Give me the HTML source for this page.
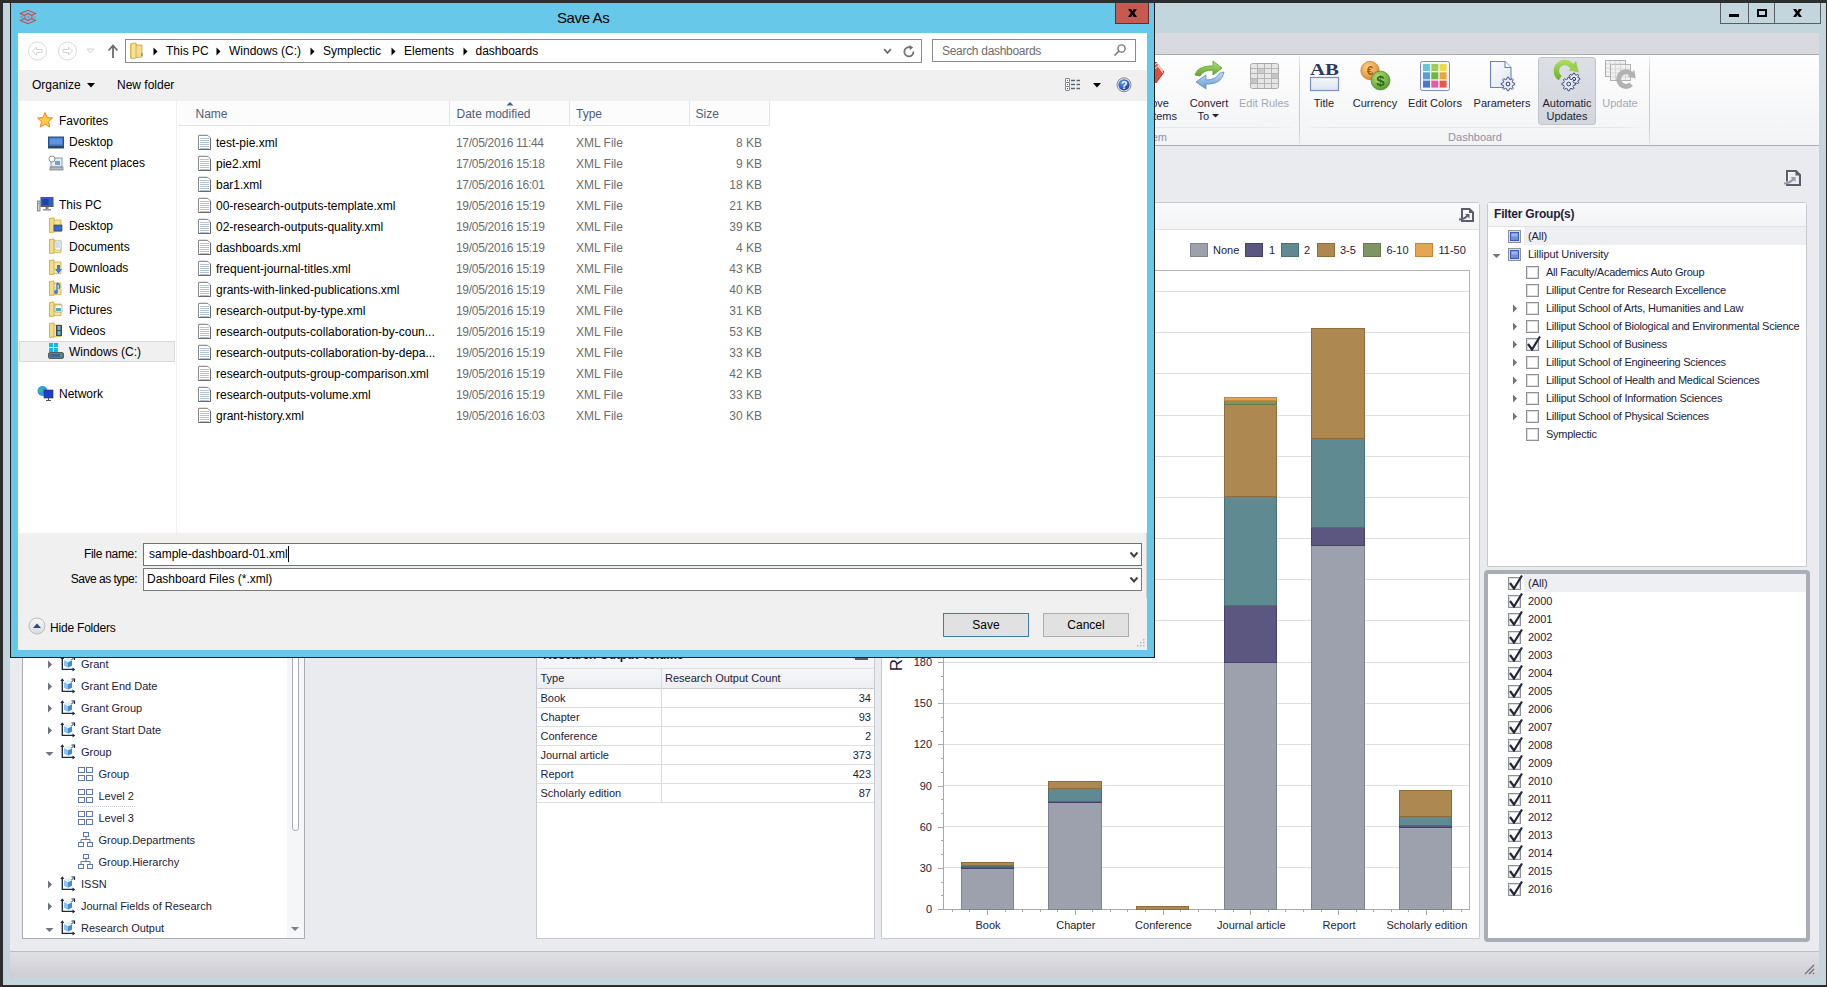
<!DOCTYPE html><html><head><meta charset="utf-8"><style>html,body{margin:0;padding:0}body{width:1827px;height:987px;overflow:hidden;position:relative;background:#2d2d2d;font-family:"Liberation Sans",sans-serif}</style></head><body>
<div style="position:absolute;left:3px;top:3px;width:1823px;height:982px;background:#c4d6dd"></div>
<div style="position:absolute;left:1720px;top:3px;width:101px;height:21px;background:#c4d6dd;border:1px solid #5a5d62;border-top:none;box-sizing:border-box"></div>
<div style="position:absolute;left:1748px;top:3px;width:1px;height:21px;background:#5a5d62"></div>
<div style="position:absolute;left:1774px;top:3px;width:1px;height:21px;background:#5a5d62"></div>
<div style="position:absolute;left:1729px;top:14px;width:10px;height:3px;background:#000"></div>
<div style="position:absolute;left:1757px;top:9px;width:10px;height:8px;border:2px solid #000;box-sizing:border-box"></div>
<svg style="position:absolute;left:1793px;top:9px" width="9" height="9" viewBox="0 0 9 9"><path d="M0 0 H3.2 L4.5 2.3 L5.8 0 H9 L6.2 4 L9 8 H5.8 L4.5 5.7 L3.2 8 H0 L2.8 4 Z" fill="#000"/></svg>
<div style="position:absolute;left:10px;top:33px;width:1809px;height:945px;background:#e9ebef"></div>
<div style="position:absolute;left:10px;top:33px;width:1809px;height:22px;background:#d9dadf;border-bottom:1px solid #a8abb6;box-sizing:border-box"></div>
<div style="position:absolute;left:10px;top:55px;width:1809px;height:91px;background:linear-gradient(#fefefe,#f2f3f5);border-bottom:1px solid #a9adb6;box-sizing:border-box"></div>
<div style="position:absolute;left:1299px;top:56px;width:1px;height:89px;background:linear-gradient(#f0f0f3,#c9ccd3 20%,#c9ccd3 80%,#e6e7ea)"></div>
<div style="position:absolute;left:1649px;top:56px;width:1px;height:89px;background:linear-gradient(#f0f0f3,#c9ccd3 20%,#c9ccd3 80%,#e6e7ea)"></div>
<div style="position:absolute;left:1155px;top:127px;width:140px;height:1px;background:linear-gradient(90deg,#e3e5ea,#e3e5ea 70%,rgba(227,229,234,0))"></div>
<div style="position:absolute;left:1302px;top:127px;width:343px;height:1px;background:linear-gradient(90deg,rgba(227,229,234,0),#e3e5ea 10%,#e3e5ea 90%,rgba(227,229,234,0))"></div>
<div style="position:absolute;left:10px;top:951px;width:1809px;height:27px;background:linear-gradient(#dfe0e4,#cdcdd3);border-top:1px solid #bcbec5;box-sizing:border-box"></div>
<svg style="position:absolute;left:1803px;top:963px" width="12" height="12" viewBox="0 0 12 12"><path d="M11 2 L2 11 M11 6 L6 11 M11 10 L10 11" stroke="#6b6e76" stroke-width="1.2"/></svg>
<div style="position:absolute;left:22px;top:640px;width:283px;height:299px;background:#fff;border:1px solid #a9acb4;box-sizing:border-box"></div>
<div style="position:absolute;left:287px;top:641px;width:17px;height:297px;background:#f5f6f8"></div>
<div style="position:absolute;left:292px;top:641px;width:7px;height:190px;background:#fff;border:1px solid #a9acb4;border-radius:3px;box-sizing:border-box"></div>
<svg style="position:absolute;left:290px;top:926px" width="11" height="6" viewBox="0 0 11 6"><path d="M1 1 L9 1 L5 5 Z" fill="#7b7e86"/></svg>
<div style="position:absolute;left:536px;top:640px;width:339px;height:299px;background:#fff;border:1px solid #c7cad1;box-sizing:border-box"></div>
<div style="position:absolute;left:537px;top:641px;width:337px;height:28px;background:linear-gradient(#f9f9fa,#f3f4f6);border-bottom:1px solid #dfe1e5;box-sizing:border-box"></div>
<div style="position:absolute;left:881px;top:202px;width:599px;height:737px;background:#fff;border:1px solid #c7cad1;border-radius:3px 3px 0 0;box-sizing:border-box"></div>
<div style="position:absolute;left:882px;top:203px;width:597px;height:27px;background:linear-gradient(#fafafb,#f3f4f6);border-bottom:1px solid #dfe1e5;box-sizing:border-box"></div>
<div style="position:absolute;left:1487px;top:202px;width:320px;height:365px;background:#fff;border:1px solid #c7cad1;border-radius:3px 3px 0 0;box-sizing:border-box"></div>
<div style="position:absolute;left:1488px;top:203px;width:318px;height:24px;background:linear-gradient(#fafafb,#f3f4f6);border-bottom:1px solid #dfe1e5;box-sizing:border-box"></div>
<div style="position:absolute;left:1484px;top:570px;width:326px;height:372px;background:#fff;border:4px solid #a9adb5;border-radius:4px;box-sizing:border-box"></div>
<svg style="position:absolute;left:1148px;top:60px" width="18" height="26" viewBox="0 0 18 26"><path d="M0 10 L8 2 L16 12 L8 23 Z" fill="#d9503e" stroke="#b83c2c" stroke-width="1"/><path d="M3 8 L9 3 L15 11 M4 11 L10 6 L15 13" fill="none" stroke="#f6cfc6" stroke-width="1.2"/></svg>
<div style="position:absolute;right:658px;top:97.69px;font:normal 11px/11px 'Liberation Sans', sans-serif;color:#1e2238;white-space:nowrap;text-align:right;">ove</div>
<div style="position:absolute;right:650px;top:110.69px;font:normal 11px/11px 'Liberation Sans', sans-serif;color:#1e2238;white-space:nowrap;text-align:right;">tems</div>
<div style="position:absolute;right:660px;top:131.69px;font:normal 11px/11px 'Liberation Sans', sans-serif;color:#8d93a8;white-space:nowrap;text-align:right;">em</div>
<svg style="position:absolute;left:1193px;top:59px" width="33" height="33" viewBox="0 0 33 33"><defs><linearGradient id="cg1" x1="0" y1="0" x2="0" y2="1"><stop offset="0" stop-color="#b6e27a"/><stop offset="1" stop-color="#5ea52a"/></linearGradient><linearGradient id="cg2" x1="0" y1="0" x2="0" y2="1"><stop offset="0" stop-color="#c9e0f6"/><stop offset="1" stop-color="#5f97d3"/></linearGradient></defs><path d="M2 16 Q4 8 16 7 L20 7 L20 2 L29 9 L20 16 L20 11 Q10 11 7 17 Z" fill="url(#cg1)" stroke="#5d9a2e" stroke-width="0.8"/><path d="M31 13 Q29 24 17 25 L13 25 L13 30 L3 23 L13 16 L13 21 Q23 21 27 14 Z" fill="url(#cg2)" stroke="#5b8cc4" stroke-width="0.8"/></svg>
<div style="position:absolute;left:1009px;width:400px;text-align:center;top:97.69px;font:normal 11px/11px 'Liberation Sans', sans-serif;color:#1e2238;white-space:nowrap;">Convert</div>
<div style="position:absolute;left:1197.5px;top:110.69px;font:normal 11px/11px 'Liberation Sans', sans-serif;color:#1e2238;white-space:nowrap;">To</div>
<svg style="position:absolute;left:1212px;top:114px" width="7" height="4" viewBox="0 0 7 4"><path d="M0 0 L7 0 L3.5 3.5 Z" fill="#1e2238"/></svg>
<svg style="position:absolute;left:1250px;top:63px" width="30" height="27" viewBox="0 0 30 27"><rect x="0.5" y="0.5" width="28" height="25" rx="2" fill="#e6e6e6" stroke="#a8a8a8"/><rect x="7.5" y="5.5" width="7" height="5" fill="#cdcdcd"/><rect x="21.5" y="10.5" width="7" height="5" fill="#c4c4c4"/><rect x="0.5" y="15.5" width="7" height="5" fill="#c4c4c4"/><g stroke="#b4b4b4" stroke-width="1"><path d="M7.5 1V25M14.5 1V25M21.5 1V25M1 5.5H28M1 10.5H28M1 15.5H28M1 20.5H28"/></g></svg>
<div style="position:absolute;left:1064px;width:400px;text-align:center;top:97.69px;font:normal 11px/11px 'Liberation Sans', sans-serif;color:#a4a8b9;white-space:nowrap;">Edit Rules</div>
<svg style="position:absolute;left:1308px;top:60px" width="33" height="32" viewBox="0 0 33 32"><defs><linearGradient id="tg" x1="0" y1="0" x2="0" y2="1"><stop offset="0" stop-color="#f4f6fb"/><stop offset="1" stop-color="#dde4f2"/></linearGradient></defs><text x="2" y="14.5" font-family="Liberation Serif" font-weight="bold" font-size="17" fill="#2c3b5c" textLength="29" lengthAdjust="spacingAndGlyphs">AB</text><rect x="2.5" y="17.5" width="28" height="13" fill="url(#tg)" stroke="#7d8fc2" stroke-width="1.2"/></svg>
<div style="position:absolute;left:1124px;width:400px;text-align:center;top:97.69px;font:normal 11px/11px 'Liberation Sans', sans-serif;color:#1e2238;white-space:nowrap;">Title</div>
<svg style="position:absolute;left:1355px;top:60px" width="36" height="32" viewBox="0 0 36 32"><defs><radialGradient id="eg" cx="0.4" cy="0.35" r="0.7"><stop offset="0" stop-color="#ffd98a"/><stop offset="1" stop-color="#d9822b"/></radialGradient><radialGradient id="dg" cx="0.4" cy="0.35" r="0.7"><stop offset="0" stop-color="#b9e27e"/><stop offset="1" stop-color="#4f9a28"/></radialGradient></defs><circle cx="15" cy="10.5" r="9.2" fill="url(#eg)" stroke="#c07020" stroke-width="0.6"/><text x="15" y="15" font-family="Liberation Sans" font-weight="bold" font-size="12" fill="#a85a14" text-anchor="middle">€</text><circle cx="25.5" cy="20.5" r="9.5" fill="url(#dg)" stroke="#3f7f20" stroke-width="0.6"/><text x="25.5" y="26" font-family="Liberation Sans" font-weight="bold" font-size="15" fill="#2f6a18" text-anchor="middle">$</text></svg>
<div style="position:absolute;left:1175px;width:400px;text-align:center;top:97.69px;font:normal 11px/11px 'Liberation Sans', sans-serif;color:#1e2238;white-space:nowrap;">Currency</div>
<svg style="position:absolute;left:1420px;top:61px" width="31" height="31" viewBox="0 0 31 31"><rect x="0.5" y="0.5" width="29" height="29" rx="2" fill="#f4f6fa" stroke="#7d8fb8" stroke-width="1"/><rect x="3.0" y="3.0" width="7" height="7" fill="#63c7d5"/><rect x="11.3" y="3.0" width="7" height="7" fill="#9fcf4f"/><rect x="19.6" y="3.0" width="7" height="7" fill="#f0d94f"/><rect x="3.0" y="11.3" width="7" height="7" fill="#5b9bd8"/><rect x="11.3" y="11.3" width="7" height="7" fill="#6cb83a"/><rect x="19.6" y="11.3" width="7" height="7" fill="#f2a140"/><rect x="3.0" y="19.6" width="7" height="7" fill="#4a78c8"/><rect x="11.3" y="19.6" width="7" height="7" fill="#e85aa8"/><rect x="19.6" y="19.6" width="7" height="7" fill="#e8584a"/></svg>
<div style="position:absolute;left:1235px;width:400px;text-align:center;top:97.69px;font:normal 11px/11px 'Liberation Sans', sans-serif;color:#1e2238;white-space:nowrap;">Edit Colors</div>
<svg style="position:absolute;left:1489px;top:60px" width="30" height="32" viewBox="0 0 30 32"><defs><linearGradient id="pg" x1="0" y1="0" x2="1" y2="1"><stop offset="0" stop-color="#fbfcfe"/><stop offset="1" stop-color="#dfe5f1"/></linearGradient></defs><path d="M1.5 1.5 L16 1.5 L22 7.5 L22 27.5 L1.5 27.5 Z" fill="url(#pg)" stroke="#6f82bd" stroke-width="1.1"/><path d="M16 1.5 L16 7.5 L22 7.5" fill="#fff" stroke="#6f82bd" stroke-width="1.1"/><polygon points="25.77,23.33 25.77,24.67 23.69,25.42 23.32,26.31 24.26,28.31 23.31,29.26 21.31,28.32 20.42,28.69 19.67,30.77 18.33,30.77 17.58,28.69 16.69,28.32 14.69,29.26 13.74,28.31 14.68,26.31 14.31,25.42 12.23,24.67 12.23,23.33 14.31,22.58 14.68,21.69 13.74,19.69 14.69,18.74 16.69,19.68 17.58,19.31 18.33,17.23 19.67,17.23 20.42,19.31 21.31,19.68 23.31,18.74 24.26,19.69 23.32,21.69 23.69,22.58" fill="#e9ecf3" stroke="#2f3d6e" stroke-width="0.9" stroke-linejoin="round"/><circle cx="19" cy="24" r="1.90" fill="none" stroke="#2f3d6e" stroke-width="1"/></svg>
<div style="position:absolute;left:1302px;width:400px;text-align:center;top:97.69px;font:normal 11px/11px 'Liberation Sans', sans-serif;color:#1e2238;white-space:nowrap;">Parameters</div>
<div style="position:absolute;left:1538px;top:57px;width:58px;height:68px;background:linear-gradient(#dcdfe5,#d3d6dd);border:1px solid #c2c5cc;border-radius:3px;box-sizing:border-box"></div>
<svg style="position:absolute;left:1552px;top:58px" width="32" height="34" viewBox="0 0 32 34"><defs><linearGradient id="ag" x1="0" y1="0" x2="0" y2="1"><stop offset="0" stop-color="#a6da5c"/><stop offset="1" stop-color="#6db42c"/></linearGradient></defs><path d="M8.25 20.05 A8.5 8.5 0 1 1 20.2 8.6" fill="none" stroke="url(#ag)" stroke-width="5.3"/><path d="M23.9 3 L27 14.5 L16.7 12.2 Z" fill="#96d04e"/><polygon points="27.97,20.41 27.97,21.59 26.13,22.25 25.81,23.04 26.64,24.81 25.81,25.64 24.04,24.81 23.25,25.13 22.59,26.97 21.41,26.97 20.75,25.13 19.96,24.81 18.19,25.64 17.36,24.81 18.19,23.04 17.87,22.25 16.03,21.59 16.03,20.41 17.87,19.75 18.19,18.96 17.36,17.19 18.19,16.36 19.96,17.19 20.75,16.87 21.41,15.03 22.59,15.03 23.25,16.87 24.04,17.19 25.81,16.36 26.64,17.19 25.81,18.96 26.13,19.75" fill="#e9ecf3" stroke="#2f3d6e" stroke-width="0.9" stroke-linejoin="round"/><circle cx="22" cy="21" r="1.68" fill="none" stroke="#2f3d6e" stroke-width="1"/><polygon points="23.47,25.33 23.47,26.67 21.39,27.42 21.02,28.31 21.96,30.31 21.01,31.26 19.01,30.32 18.12,30.69 17.37,32.77 16.03,32.77 15.28,30.69 14.39,30.32 12.39,31.26 11.44,30.31 12.38,28.31 12.01,27.42 9.93,26.67 9.93,25.33 12.01,24.58 12.38,23.69 11.44,21.69 12.39,20.74 14.39,21.68 15.28,21.31 16.03,19.23 17.37,19.23 18.12,21.31 19.01,21.68 21.01,20.74 21.96,21.69 21.02,23.69 21.39,24.58" fill="#e9ecf3" stroke="#2f3d6e" stroke-width="0.9" stroke-linejoin="round"/><circle cx="16.7" cy="26" r="1.90" fill="none" stroke="#2f3d6e" stroke-width="1"/></svg>
<div style="position:absolute;left:1367px;width:400px;text-align:center;top:97.69px;font:normal 11px/11px 'Liberation Sans', sans-serif;color:#1e2238;white-space:nowrap;">Automatic</div>
<div style="position:absolute;left:1367px;width:400px;text-align:center;top:110.69px;font:normal 11px/11px 'Liberation Sans', sans-serif;color:#1e2238;white-space:nowrap;">Updates</div>
<svg style="position:absolute;left:1603px;top:59px" width="36" height="32" viewBox="0 0 36 32"><g fill="#f2f2f2" stroke="#b0b0b0" stroke-width="1"><rect x="2.5" y="1.5" width="20" height="16"/><rect x="7.5" y="5.5" width="20" height="16"/></g><g stroke="#d2d2d2" stroke-width="0.8"><path d="M8 10H27M8 14H27M8 18H27M12.5 6V21M17.5 6V21M22.5 6V21M3 5H22M3 9H7M3 13H7M7 2V5M12 2V5M17 2V5"/></g><path d="M28.2 25.2 A7.3 7.3 0 1 1 28 14.8" fill="none" stroke="#b2b2b2" stroke-width="5"/><path d="M31.3 11 L32.7 19.6 L24.4 17.6 Z" fill="#b2b2b2"/></svg>
<div style="position:absolute;left:1420px;width:400px;text-align:center;top:97.69px;font:normal 11px/11px 'Liberation Sans', sans-serif;color:#a4a8b9;white-space:nowrap;">Update</div>
<div style="position:absolute;left:1275px;width:400px;text-align:center;top:131.69px;font:normal 11px/11px 'Liberation Sans', sans-serif;color:#8d93a8;white-space:nowrap;">Dashboard</div>
<svg style="position:absolute;left:1783px;top:169px" width="19" height="19" viewBox="0 0 19 19"><path d="M4 12.5 V2 H13 L17 6 V16 H3" fill="none" stroke="#5b5b6b" stroke-width="2"/><path d="M12.5 1.5 V6.5 H17.5 Z" fill="#5b5b6b"/><rect x="5" y="3" width="7" height="1" fill="#fff"/><rect x="5" y="3" width="1" height="12" fill="#fff" opacity="0.8"/><path d="M1 14.5 Q7 14.5 11.5 9" fill="none" stroke="#9b9ba7" stroke-width="2"/><path d="M7.5 8 L12.5 8 L12.5 13 Z" fill="#9b9ba7"/></svg>
<svg style="position:absolute;left:47px;top:660px" width="6" height="9" viewBox="0 0 6 9"><path d="M1 0.5 L5 4.5 L1 8.5 Z" fill="#6f7380"/></svg>
<svg style="position:absolute;left:60px;top:654px" width="17" height="18" viewBox="0 0 17 18"><path d="M2.3 4 V15.4 H13.5" fill="none" stroke="#1f2a40" stroke-width="1.4"/><path d="M0.3 5 L2.3 2.2 L4.3 5 Z M12.5 13.4 L15.3 15.4 L12.5 17.4 Z" fill="#1f2a40"/><path d="M11.5 3 H14.5 V6" fill="none" stroke="#1f2a40" stroke-width="1.2"/><path d="M13.8 3.7 L11 6.5" stroke="#1f2a40" stroke-width="1"/><path d="M4 6.5 L8 4.5 L12 6.5 L12 11.5 L8 13.5 L4 11.5 Z" fill="#5fa6e4"/><path d="M4 6.5 L8 8.5 L12 6.5 L8 4.5 Z" fill="#e4f2ff"/><path d="M8 8.5 L8 13.5 L12 11.5 L12 6.5 Z" fill="#3f8bd4"/><path d="M4 6.5 L8 8.5 L8 13.5 L4 11.5 Z" fill="#8cc2f0"/></svg>
<div style="position:absolute;left:81px;top:658.69px;font:normal 11px/11px 'Liberation Sans', sans-serif;color:#1e2238;white-space:nowrap;">Grant</div>
<svg style="position:absolute;left:47px;top:682px" width="6" height="9" viewBox="0 0 6 9"><path d="M1 0.5 L5 4.5 L1 8.5 Z" fill="#6f7380"/></svg>
<svg style="position:absolute;left:60px;top:676px" width="17" height="18" viewBox="0 0 17 18"><path d="M2.3 4 V15.4 H13.5" fill="none" stroke="#1f2a40" stroke-width="1.4"/><path d="M0.3 5 L2.3 2.2 L4.3 5 Z M12.5 13.4 L15.3 15.4 L12.5 17.4 Z" fill="#1f2a40"/><path d="M11.5 3 H14.5 V6" fill="none" stroke="#1f2a40" stroke-width="1.2"/><path d="M13.8 3.7 L11 6.5" stroke="#1f2a40" stroke-width="1"/><path d="M4 6.5 L8 4.5 L12 6.5 L12 11.5 L8 13.5 L4 11.5 Z" fill="#5fa6e4"/><path d="M4 6.5 L8 8.5 L12 6.5 L8 4.5 Z" fill="#e4f2ff"/><path d="M8 8.5 L8 13.5 L12 11.5 L12 6.5 Z" fill="#3f8bd4"/><path d="M4 6.5 L8 8.5 L8 13.5 L4 11.5 Z" fill="#8cc2f0"/></svg>
<div style="position:absolute;left:81px;top:680.69px;font:normal 11px/11px 'Liberation Sans', sans-serif;color:#1e2238;white-space:nowrap;">Grant End Date</div>
<svg style="position:absolute;left:47px;top:704px" width="6" height="9" viewBox="0 0 6 9"><path d="M1 0.5 L5 4.5 L1 8.5 Z" fill="#6f7380"/></svg>
<svg style="position:absolute;left:60px;top:698px" width="17" height="18" viewBox="0 0 17 18"><path d="M2.3 4 V15.4 H13.5" fill="none" stroke="#1f2a40" stroke-width="1.4"/><path d="M0.3 5 L2.3 2.2 L4.3 5 Z M12.5 13.4 L15.3 15.4 L12.5 17.4 Z" fill="#1f2a40"/><path d="M11.5 3 H14.5 V6" fill="none" stroke="#1f2a40" stroke-width="1.2"/><path d="M13.8 3.7 L11 6.5" stroke="#1f2a40" stroke-width="1"/><path d="M4 6.5 L8 4.5 L12 6.5 L12 11.5 L8 13.5 L4 11.5 Z" fill="#5fa6e4"/><path d="M4 6.5 L8 8.5 L12 6.5 L8 4.5 Z" fill="#e4f2ff"/><path d="M8 8.5 L8 13.5 L12 11.5 L12 6.5 Z" fill="#3f8bd4"/><path d="M4 6.5 L8 8.5 L8 13.5 L4 11.5 Z" fill="#8cc2f0"/></svg>
<div style="position:absolute;left:81px;top:702.69px;font:normal 11px/11px 'Liberation Sans', sans-serif;color:#1e2238;white-space:nowrap;">Grant Group</div>
<svg style="position:absolute;left:47px;top:726px" width="6" height="9" viewBox="0 0 6 9"><path d="M1 0.5 L5 4.5 L1 8.5 Z" fill="#6f7380"/></svg>
<svg style="position:absolute;left:60px;top:720px" width="17" height="18" viewBox="0 0 17 18"><path d="M2.3 4 V15.4 H13.5" fill="none" stroke="#1f2a40" stroke-width="1.4"/><path d="M0.3 5 L2.3 2.2 L4.3 5 Z M12.5 13.4 L15.3 15.4 L12.5 17.4 Z" fill="#1f2a40"/><path d="M11.5 3 H14.5 V6" fill="none" stroke="#1f2a40" stroke-width="1.2"/><path d="M13.8 3.7 L11 6.5" stroke="#1f2a40" stroke-width="1"/><path d="M4 6.5 L8 4.5 L12 6.5 L12 11.5 L8 13.5 L4 11.5 Z" fill="#5fa6e4"/><path d="M4 6.5 L8 8.5 L12 6.5 L8 4.5 Z" fill="#e4f2ff"/><path d="M8 8.5 L8 13.5 L12 11.5 L12 6.5 Z" fill="#3f8bd4"/><path d="M4 6.5 L8 8.5 L8 13.5 L4 11.5 Z" fill="#8cc2f0"/></svg>
<div style="position:absolute;left:81px;top:724.69px;font:normal 11px/11px 'Liberation Sans', sans-serif;color:#1e2238;white-space:nowrap;">Grant Start Date</div>
<svg style="position:absolute;left:45px;top:751px" width="9" height="6" viewBox="0 0 9 6"><path d="M0.5 1 L8.5 1 L4.5 5 Z" fill="#6f7380"/></svg>
<svg style="position:absolute;left:60px;top:742px" width="17" height="18" viewBox="0 0 17 18"><path d="M2.3 4 V15.4 H13.5" fill="none" stroke="#1f2a40" stroke-width="1.4"/><path d="M0.3 5 L2.3 2.2 L4.3 5 Z M12.5 13.4 L15.3 15.4 L12.5 17.4 Z" fill="#1f2a40"/><path d="M11.5 3 H14.5 V6" fill="none" stroke="#1f2a40" stroke-width="1.2"/><path d="M13.8 3.7 L11 6.5" stroke="#1f2a40" stroke-width="1"/><path d="M4 6.5 L8 4.5 L12 6.5 L12 11.5 L8 13.5 L4 11.5 Z" fill="#5fa6e4"/><path d="M4 6.5 L8 8.5 L12 6.5 L8 4.5 Z" fill="#e4f2ff"/><path d="M8 8.5 L8 13.5 L12 11.5 L12 6.5 Z" fill="#3f8bd4"/><path d="M4 6.5 L8 8.5 L8 13.5 L4 11.5 Z" fill="#8cc2f0"/></svg>
<div style="position:absolute;left:81px;top:746.69px;font:normal 11px/11px 'Liberation Sans', sans-serif;color:#1e2238;white-space:nowrap;">Group</div>
<svg style="position:absolute;left:78px;top:767px" width="16" height="15" viewBox="0 0 16 15"><g fill="none" stroke="#6276a8" stroke-width="1"><rect x="0.5" y="0.5" width="6" height="5"/><rect x="8.5" y="0.5" width="6" height="5"/><rect x="0.5" y="8.5" width="6" height="5"/><rect x="8.5" y="8.5" width="6" height="5"/></g></svg>
<div style="position:absolute;left:98.5px;top:768.69px;font:normal 11px/11px 'Liberation Sans', sans-serif;color:#1e2238;white-space:nowrap;">Group</div>
<svg style="position:absolute;left:78px;top:789px" width="16" height="15" viewBox="0 0 16 15"><g fill="none" stroke="#6276a8" stroke-width="1"><rect x="0.5" y="0.5" width="6" height="5"/><rect x="8.5" y="0.5" width="6" height="5"/><rect x="0.5" y="8.5" width="6" height="5"/><rect x="8.5" y="8.5" width="6" height="5"/></g></svg>
<div style="position:absolute;left:98.5px;top:790.69px;font:normal 11px/11px 'Liberation Sans', sans-serif;color:#1e2238;white-space:nowrap;">Level 2</div>
<svg style="position:absolute;left:78px;top:811px" width="16" height="15" viewBox="0 0 16 15"><g fill="none" stroke="#6276a8" stroke-width="1"><rect x="0.5" y="0.5" width="6" height="5"/><rect x="8.5" y="0.5" width="6" height="5"/><rect x="0.5" y="8.5" width="6" height="5"/><rect x="8.5" y="8.5" width="6" height="5"/></g></svg>
<div style="position:absolute;left:98.5px;top:812.69px;font:normal 11px/11px 'Liberation Sans', sans-serif;color:#1e2238;white-space:nowrap;">Level 3</div>
<svg style="position:absolute;left:78px;top:832px" width="16" height="16" viewBox="0 0 16 16"><g fill="none" stroke="#6276a8" stroke-width="1"><rect x="5.5" y="0.5" width="5" height="4"/><rect x="0.5" y="10.5" width="5" height="4"/><rect x="9.5" y="10.5" width="5" height="4"/><path d="M8 4.5 V7.5 M3 7.5 H12 M3 7.5 V10.5 M12 7.5 V10.5"/></g></svg>
<div style="position:absolute;left:98.5px;top:834.69px;font:normal 11px/11px 'Liberation Sans', sans-serif;color:#1e2238;white-space:nowrap;">Group.Departments</div>
<svg style="position:absolute;left:78px;top:854px" width="16" height="16" viewBox="0 0 16 16"><g fill="none" stroke="#6276a8" stroke-width="1"><rect x="5.5" y="0.5" width="5" height="4"/><rect x="0.5" y="10.5" width="5" height="4"/><rect x="9.5" y="10.5" width="5" height="4"/><path d="M8 4.5 V7.5 M3 7.5 H12 M3 7.5 V10.5 M12 7.5 V10.5"/></g></svg>
<div style="position:absolute;left:98.5px;top:856.69px;font:normal 11px/11px 'Liberation Sans', sans-serif;color:#1e2238;white-space:nowrap;">Group.Hierarchy</div>
<svg style="position:absolute;left:47px;top:880px" width="6" height="9" viewBox="0 0 6 9"><path d="M1 0.5 L5 4.5 L1 8.5 Z" fill="#6f7380"/></svg>
<svg style="position:absolute;left:60px;top:874px" width="17" height="18" viewBox="0 0 17 18"><path d="M2.3 4 V15.4 H13.5" fill="none" stroke="#1f2a40" stroke-width="1.4"/><path d="M0.3 5 L2.3 2.2 L4.3 5 Z M12.5 13.4 L15.3 15.4 L12.5 17.4 Z" fill="#1f2a40"/><path d="M11.5 3 H14.5 V6" fill="none" stroke="#1f2a40" stroke-width="1.2"/><path d="M13.8 3.7 L11 6.5" stroke="#1f2a40" stroke-width="1"/><path d="M4 6.5 L8 4.5 L12 6.5 L12 11.5 L8 13.5 L4 11.5 Z" fill="#5fa6e4"/><path d="M4 6.5 L8 8.5 L12 6.5 L8 4.5 Z" fill="#e4f2ff"/><path d="M8 8.5 L8 13.5 L12 11.5 L12 6.5 Z" fill="#3f8bd4"/><path d="M4 6.5 L8 8.5 L8 13.5 L4 11.5 Z" fill="#8cc2f0"/></svg>
<div style="position:absolute;left:81px;top:878.69px;font:normal 11px/11px 'Liberation Sans', sans-serif;color:#1e2238;white-space:nowrap;">ISSN</div>
<svg style="position:absolute;left:47px;top:902px" width="6" height="9" viewBox="0 0 6 9"><path d="M1 0.5 L5 4.5 L1 8.5 Z" fill="#6f7380"/></svg>
<svg style="position:absolute;left:60px;top:896px" width="17" height="18" viewBox="0 0 17 18"><path d="M2.3 4 V15.4 H13.5" fill="none" stroke="#1f2a40" stroke-width="1.4"/><path d="M0.3 5 L2.3 2.2 L4.3 5 Z M12.5 13.4 L15.3 15.4 L12.5 17.4 Z" fill="#1f2a40"/><path d="M11.5 3 H14.5 V6" fill="none" stroke="#1f2a40" stroke-width="1.2"/><path d="M13.8 3.7 L11 6.5" stroke="#1f2a40" stroke-width="1"/><path d="M4 6.5 L8 4.5 L12 6.5 L12 11.5 L8 13.5 L4 11.5 Z" fill="#5fa6e4"/><path d="M4 6.5 L8 8.5 L12 6.5 L8 4.5 Z" fill="#e4f2ff"/><path d="M8 8.5 L8 13.5 L12 11.5 L12 6.5 Z" fill="#3f8bd4"/><path d="M4 6.5 L8 8.5 L8 13.5 L4 11.5 Z" fill="#8cc2f0"/></svg>
<div style="position:absolute;left:81px;top:900.69px;font:normal 11px/11px 'Liberation Sans', sans-serif;color:#1e2238;white-space:nowrap;">Journal Fields of Research</div>
<svg style="position:absolute;left:45px;top:927px" width="9" height="6" viewBox="0 0 9 6"><path d="M0.5 1 L8.5 1 L4.5 5 Z" fill="#6f7380"/></svg>
<svg style="position:absolute;left:60px;top:918px" width="17" height="18" viewBox="0 0 17 18"><path d="M2.3 4 V15.4 H13.5" fill="none" stroke="#1f2a40" stroke-width="1.4"/><path d="M0.3 5 L2.3 2.2 L4.3 5 Z M12.5 13.4 L15.3 15.4 L12.5 17.4 Z" fill="#1f2a40"/><path d="M11.5 3 H14.5 V6" fill="none" stroke="#1f2a40" stroke-width="1.2"/><path d="M13.8 3.7 L11 6.5" stroke="#1f2a40" stroke-width="1"/><path d="M4 6.5 L8 4.5 L12 6.5 L12 11.5 L8 13.5 L4 11.5 Z" fill="#5fa6e4"/><path d="M4 6.5 L8 8.5 L12 6.5 L8 4.5 Z" fill="#e4f2ff"/><path d="M8 8.5 L8 13.5 L12 11.5 L12 6.5 Z" fill="#3f8bd4"/><path d="M4 6.5 L8 8.5 L8 13.5 L4 11.5 Z" fill="#8cc2f0"/></svg>
<div style="position:absolute;left:81px;top:922.69px;font:normal 11px/11px 'Liberation Sans', sans-serif;color:#1e2238;white-space:nowrap;">Research Output</div>
<div style="position:absolute;left:76px;top:806px;width:60px;height:1px;background:repeating-linear-gradient(90deg,#c9ccd4 0 1px,transparent 1px 2px)"></div>
<div style="position:absolute;left:543px;top:648.84px;font:bold 12px/12px 'Liberation Sans', sans-serif;color:#1e2238;white-space:nowrap;letter-spacing:-0.1px">Research Output Volume</div>
<svg style="position:absolute;left:852px;top:645px" width="17" height="17" viewBox="0 0 17 17"><path d="M4 11 V2 H11.5 L15 5.5 V14 H3" fill="none" stroke="#5b5b6b" stroke-width="2"/><path d="M11 1.5 V6 H15.5 Z" fill="#5b5b6b"/><path d="M1 12.5 Q6.5 12.5 10 8" fill="none" stroke="#5b5b6b" stroke-width="2"/><path d="M7 7 L11.5 7 L11.5 11.5 Z" fill="#5b5b6b"/></svg>
<div style="position:absolute;left:537px;top:669px;width:337px;height:20px;background:linear-gradient(#f5f6f8,#eceef1);border-bottom:1px solid #c9ccd3;box-sizing:border-box"></div>
<div style="position:absolute;left:661px;top:668px;width:1px;height:135px;background:#d8dadf"></div>
<div style="position:absolute;left:540.5px;top:673.19px;font:normal 11px/11px 'Liberation Sans', sans-serif;color:#1e2238;white-space:nowrap;">Type</div>
<div style="position:absolute;left:665px;top:673.19px;font:normal 11px/11px 'Liberation Sans', sans-serif;color:#1e2238;white-space:nowrap;">Research Output Count</div>
<div style="position:absolute;left:537px;top:707px;width:337px;height:1px;background:#dcdee3"></div>
<div style="position:absolute;left:540.5px;top:692.69px;font:normal 11px/11px 'Liberation Sans', sans-serif;color:#1e2238;white-space:nowrap;">Book</div>
<div style="position:absolute;right:956px;top:692.69px;font:normal 11px/11px 'Liberation Sans', sans-serif;color:#1e2238;white-space:nowrap;text-align:right;">34</div>
<div style="position:absolute;left:537px;top:726px;width:337px;height:1px;background:#dcdee3"></div>
<div style="position:absolute;left:540.5px;top:711.69px;font:normal 11px/11px 'Liberation Sans', sans-serif;color:#1e2238;white-space:nowrap;">Chapter</div>
<div style="position:absolute;right:956px;top:711.69px;font:normal 11px/11px 'Liberation Sans', sans-serif;color:#1e2238;white-space:nowrap;text-align:right;">93</div>
<div style="position:absolute;left:537px;top:745px;width:337px;height:1px;background:#dcdee3"></div>
<div style="position:absolute;left:540.5px;top:730.69px;font:normal 11px/11px 'Liberation Sans', sans-serif;color:#1e2238;white-space:nowrap;">Conference</div>
<div style="position:absolute;right:956px;top:730.69px;font:normal 11px/11px 'Liberation Sans', sans-serif;color:#1e2238;white-space:nowrap;text-align:right;">2</div>
<div style="position:absolute;left:537px;top:764px;width:337px;height:1px;background:#dcdee3"></div>
<div style="position:absolute;left:540.5px;top:749.69px;font:normal 11px/11px 'Liberation Sans', sans-serif;color:#1e2238;white-space:nowrap;">Journal article</div>
<div style="position:absolute;right:956px;top:749.69px;font:normal 11px/11px 'Liberation Sans', sans-serif;color:#1e2238;white-space:nowrap;text-align:right;">373</div>
<div style="position:absolute;left:537px;top:783px;width:337px;height:1px;background:#dcdee3"></div>
<div style="position:absolute;left:540.5px;top:768.69px;font:normal 11px/11px 'Liberation Sans', sans-serif;color:#1e2238;white-space:nowrap;">Report</div>
<div style="position:absolute;right:956px;top:768.69px;font:normal 11px/11px 'Liberation Sans', sans-serif;color:#1e2238;white-space:nowrap;text-align:right;">423</div>
<div style="position:absolute;left:537px;top:802px;width:337px;height:1px;background:#dcdee3"></div>
<div style="position:absolute;left:540.5px;top:787.69px;font:normal 11px/11px 'Liberation Sans', sans-serif;color:#1e2238;white-space:nowrap;">Scholarly edition</div>
<div style="position:absolute;right:956px;top:787.69px;font:normal 11px/11px 'Liberation Sans', sans-serif;color:#1e2238;white-space:nowrap;text-align:right;">87</div>
<svg style="position:absolute;left:1458px;top:207px" width="17" height="17" viewBox="0 0 17 17"><path d="M4 11 V2 H11.5 L15 5.5 V14 H3" fill="none" stroke="#5b5b6b" stroke-width="2"/><path d="M11 1.5 V6 H15.5 Z" fill="#5b5b6b"/><path d="M1 12.5 Q6.5 12.5 10 8" fill="none" stroke="#5b5b6b" stroke-width="2"/><path d="M7 7 L11.5 7 L11.5 11.5 Z" fill="#5b5b6b"/></svg>
<div style="position:absolute;left:1189.5px;top:243px;width:18px;height:14px;background:#9da1ad;border:1px solid #7f8390;box-sizing:border-box"></div>
<div style="position:absolute;left:1213px;top:244.69px;font:normal 11px/11px 'Liberation Sans', sans-serif;color:#1e2238;white-space:nowrap;">None</div>
<div style="position:absolute;left:1245px;top:243px;width:18px;height:14px;background:#5c5780;border:1px solid #46416b;box-sizing:border-box"></div>
<div style="position:absolute;left:1269px;top:244.69px;font:normal 11px/11px 'Liberation Sans', sans-serif;color:#1e2238;white-space:nowrap;">1</div>
<div style="position:absolute;left:1281px;top:243px;width:18px;height:14px;background:#5f8a91;border:1px solid #4a7077;box-sizing:border-box"></div>
<div style="position:absolute;left:1304px;top:244.69px;font:normal 11px/11px 'Liberation Sans', sans-serif;color:#1e2238;white-space:nowrap;">2</div>
<div style="position:absolute;left:1317px;top:243px;width:18px;height:14px;background:#ae8851;border:1px solid #8e6c3b;box-sizing:border-box"></div>
<div style="position:absolute;left:1340px;top:244.69px;font:normal 11px/11px 'Liberation Sans', sans-serif;color:#1e2238;white-space:nowrap;">3-5</div>
<div style="position:absolute;left:1363px;top:243px;width:18px;height:14px;background:#7e9462;border:1px solid #65794c;box-sizing:border-box"></div>
<div style="position:absolute;left:1386.5px;top:244.69px;font:normal 11px/11px 'Liberation Sans', sans-serif;color:#1e2238;white-space:nowrap;">6-10</div>
<div style="position:absolute;left:1415px;top:243px;width:18px;height:14px;background:#e4a652;border:1px solid #c5883a;box-sizing:border-box"></div>
<div style="position:absolute;left:1438.5px;top:244.69px;font:normal 11px/11px 'Liberation Sans', sans-serif;color:#1e2238;white-space:nowrap;">11-50</div>
<div style="position:absolute;left:943px;top:270px;width:527px;height:1px;background:#b4b4b4"></div>
<div style="position:absolute;left:1469px;top:270px;width:1px;height:639px;background:#b4b4b4"></div>
<div style="position:absolute;left:944px;top:867px;width:525px;height:1px;background:#dedede"></div>
<div style="position:absolute;left:944px;top:826px;width:525px;height:1px;background:#dedede"></div>
<div style="position:absolute;left:944px;top:785px;width:525px;height:1px;background:#dedede"></div>
<div style="position:absolute;left:944px;top:744px;width:525px;height:1px;background:#dedede"></div>
<div style="position:absolute;left:944px;top:703px;width:525px;height:1px;background:#dedede"></div>
<div style="position:absolute;left:944px;top:662px;width:525px;height:1px;background:#dedede"></div>
<div style="position:absolute;left:944px;top:620px;width:525px;height:1px;background:#dedede"></div>
<div style="position:absolute;left:944px;top:579px;width:525px;height:1px;background:#dedede"></div>
<div style="position:absolute;left:944px;top:538px;width:525px;height:1px;background:#dedede"></div>
<div style="position:absolute;left:944px;top:497px;width:525px;height:1px;background:#dedede"></div>
<div style="position:absolute;left:944px;top:456px;width:525px;height:1px;background:#dedede"></div>
<div style="position:absolute;left:944px;top:415px;width:525px;height:1px;background:#dedede"></div>
<div style="position:absolute;left:944px;top:373px;width:525px;height:1px;background:#dedede"></div>
<div style="position:absolute;left:944px;top:332px;width:525px;height:1px;background:#dedede"></div>
<div style="position:absolute;left:944px;top:291px;width:525px;height:1px;background:#dedede"></div>
<div style="position:absolute;left:943px;top:270px;width:1px;height:640px;background:#a8a8a8"></div>
<div style="position:absolute;left:938px;top:909px;width:5px;height:1px;background:#a8a8a8"></div>
<div style="position:absolute;left:941px;top:895px;width:2px;height:1px;background:#a8a8a8"></div>
<div style="position:absolute;left:941px;top:882px;width:2px;height:1px;background:#a8a8a8"></div>
<div style="position:absolute;left:938px;top:868px;width:5px;height:1px;background:#a8a8a8"></div>
<div style="position:absolute;left:941px;top:854px;width:2px;height:1px;background:#a8a8a8"></div>
<div style="position:absolute;left:941px;top:840px;width:2px;height:1px;background:#a8a8a8"></div>
<div style="position:absolute;left:938px;top:827px;width:5px;height:1px;background:#a8a8a8"></div>
<div style="position:absolute;left:941px;top:813px;width:2px;height:1px;background:#a8a8a8"></div>
<div style="position:absolute;left:941px;top:799px;width:2px;height:1px;background:#a8a8a8"></div>
<div style="position:absolute;left:938px;top:786px;width:5px;height:1px;background:#a8a8a8"></div>
<div style="position:absolute;left:941px;top:772px;width:2px;height:1px;background:#a8a8a8"></div>
<div style="position:absolute;left:941px;top:758px;width:2px;height:1px;background:#a8a8a8"></div>
<div style="position:absolute;left:938px;top:744px;width:5px;height:1px;background:#a8a8a8"></div>
<div style="position:absolute;left:941px;top:731px;width:2px;height:1px;background:#a8a8a8"></div>
<div style="position:absolute;left:941px;top:717px;width:2px;height:1px;background:#a8a8a8"></div>
<div style="position:absolute;left:938px;top:703px;width:5px;height:1px;background:#a8a8a8"></div>
<div style="position:absolute;left:941px;top:689px;width:2px;height:1px;background:#a8a8a8"></div>
<div style="position:absolute;left:941px;top:676px;width:2px;height:1px;background:#a8a8a8"></div>
<div style="position:absolute;left:938px;top:662px;width:5px;height:1px;background:#a8a8a8"></div>
<div style="position:absolute;left:941px;top:648px;width:2px;height:1px;background:#a8a8a8"></div>
<div style="position:absolute;left:941px;top:635px;width:2px;height:1px;background:#a8a8a8"></div>
<div style="position:absolute;left:938px;top:621px;width:5px;height:1px;background:#a8a8a8"></div>
<div style="position:absolute;left:941px;top:607px;width:2px;height:1px;background:#a8a8a8"></div>
<div style="position:absolute;left:941px;top:593px;width:2px;height:1px;background:#a8a8a8"></div>
<div style="position:absolute;left:938px;top:580px;width:5px;height:1px;background:#a8a8a8"></div>
<div style="position:absolute;left:941px;top:566px;width:2px;height:1px;background:#a8a8a8"></div>
<div style="position:absolute;left:941px;top:552px;width:2px;height:1px;background:#a8a8a8"></div>
<div style="position:absolute;left:938px;top:539px;width:5px;height:1px;background:#a8a8a8"></div>
<div style="position:absolute;left:941px;top:525px;width:2px;height:1px;background:#a8a8a8"></div>
<div style="position:absolute;left:941px;top:511px;width:2px;height:1px;background:#a8a8a8"></div>
<div style="position:absolute;left:938px;top:497px;width:5px;height:1px;background:#a8a8a8"></div>
<div style="position:absolute;left:941px;top:484px;width:2px;height:1px;background:#a8a8a8"></div>
<div style="position:absolute;left:941px;top:470px;width:2px;height:1px;background:#a8a8a8"></div>
<div style="position:absolute;left:938px;top:456px;width:5px;height:1px;background:#a8a8a8"></div>
<div style="position:absolute;left:941px;top:442px;width:2px;height:1px;background:#a8a8a8"></div>
<div style="position:absolute;left:941px;top:429px;width:2px;height:1px;background:#a8a8a8"></div>
<div style="position:absolute;left:938px;top:415px;width:5px;height:1px;background:#a8a8a8"></div>
<div style="position:absolute;left:941px;top:401px;width:2px;height:1px;background:#a8a8a8"></div>
<div style="position:absolute;left:941px;top:388px;width:2px;height:1px;background:#a8a8a8"></div>
<div style="position:absolute;left:938px;top:374px;width:5px;height:1px;background:#a8a8a8"></div>
<div style="position:absolute;left:941px;top:360px;width:2px;height:1px;background:#a8a8a8"></div>
<div style="position:absolute;left:941px;top:346px;width:2px;height:1px;background:#a8a8a8"></div>
<div style="position:absolute;left:938px;top:333px;width:5px;height:1px;background:#a8a8a8"></div>
<div style="position:absolute;left:941px;top:319px;width:2px;height:1px;background:#a8a8a8"></div>
<div style="position:absolute;left:941px;top:305px;width:2px;height:1px;background:#a8a8a8"></div>
<div style="position:absolute;left:938px;top:292px;width:5px;height:1px;background:#a8a8a8"></div>
<div style="position:absolute;right:895px;top:903.69px;font:normal 11px/11px 'Liberation Sans', sans-serif;color:#1e2238;white-space:nowrap;text-align:right;">0</div>
<div style="position:absolute;right:895px;top:862.69px;font:normal 11px/11px 'Liberation Sans', sans-serif;color:#1e2238;white-space:nowrap;text-align:right;">30</div>
<div style="position:absolute;right:895px;top:821.69px;font:normal 11px/11px 'Liberation Sans', sans-serif;color:#1e2238;white-space:nowrap;text-align:right;">60</div>
<div style="position:absolute;right:895px;top:780.69px;font:normal 11px/11px 'Liberation Sans', sans-serif;color:#1e2238;white-space:nowrap;text-align:right;">90</div>
<div style="position:absolute;right:895px;top:738.69px;font:normal 11px/11px 'Liberation Sans', sans-serif;color:#1e2238;white-space:nowrap;text-align:right;">120</div>
<div style="position:absolute;right:895px;top:697.69px;font:normal 11px/11px 'Liberation Sans', sans-serif;color:#1e2238;white-space:nowrap;text-align:right;">150</div>
<div style="position:absolute;right:895px;top:656.69px;font:normal 11px/11px 'Liberation Sans', sans-serif;color:#1e2238;white-space:nowrap;text-align:right;">180</div>
<div style="position:absolute;left:747px;top:573px;width:300px;height:18px;transform:rotate(-90deg);text-align:center;font:17px/18px 'Liberation Sans', sans-serif;color:#1e2238;white-space:nowrap">Research Output Count</div>
<div style="position:absolute;left:943px;top:909px;width:527px;height:1px;background:#a8a8a8"></div>
<div style="position:absolute;left:987px;top:909px;width:1px;height:6px;background:#a8a8a8"></div>
<div style="position:absolute;left:1075px;top:909px;width:1px;height:6px;background:#a8a8a8"></div>
<div style="position:absolute;left:1163px;top:909px;width:1px;height:6px;background:#a8a8a8"></div>
<div style="position:absolute;left:1250px;top:909px;width:1px;height:6px;background:#a8a8a8"></div>
<div style="position:absolute;left:1338px;top:909px;width:1px;height:6px;background:#a8a8a8"></div>
<div style="position:absolute;left:1426px;top:909px;width:1px;height:6px;background:#a8a8a8"></div>
<div style="position:absolute;left:952px;top:909px;width:1px;height:3px;background:#a8a8a8"></div>
<div style="position:absolute;left:969px;top:909px;width:1px;height:3px;background:#a8a8a8"></div>
<div style="position:absolute;left:1005px;top:909px;width:1px;height:3px;background:#a8a8a8"></div>
<div style="position:absolute;left:1022px;top:909px;width:1px;height:3px;background:#a8a8a8"></div>
<div style="position:absolute;left:1040px;top:909px;width:1px;height:3px;background:#a8a8a8"></div>
<div style="position:absolute;left:1057px;top:909px;width:1px;height:3px;background:#a8a8a8"></div>
<div style="position:absolute;left:1092px;top:909px;width:1px;height:3px;background:#a8a8a8"></div>
<div style="position:absolute;left:1110px;top:909px;width:1px;height:3px;background:#a8a8a8"></div>
<div style="position:absolute;left:1127px;top:909px;width:1px;height:3px;background:#a8a8a8"></div>
<div style="position:absolute;left:1145px;top:909px;width:1px;height:3px;background:#a8a8a8"></div>
<div style="position:absolute;left:1180px;top:909px;width:1px;height:3px;background:#a8a8a8"></div>
<div style="position:absolute;left:1198px;top:909px;width:1px;height:3px;background:#a8a8a8"></div>
<div style="position:absolute;left:1215px;top:909px;width:1px;height:3px;background:#a8a8a8"></div>
<div style="position:absolute;left:1233px;top:909px;width:1px;height:3px;background:#a8a8a8"></div>
<div style="position:absolute;left:1268px;top:909px;width:1px;height:3px;background:#a8a8a8"></div>
<div style="position:absolute;left:1285px;top:909px;width:1px;height:3px;background:#a8a8a8"></div>
<div style="position:absolute;left:1303px;top:909px;width:1px;height:3px;background:#a8a8a8"></div>
<div style="position:absolute;left:1321px;top:909px;width:1px;height:3px;background:#a8a8a8"></div>
<div style="position:absolute;left:1356px;top:909px;width:1px;height:3px;background:#a8a8a8"></div>
<div style="position:absolute;left:1373px;top:909px;width:1px;height:3px;background:#a8a8a8"></div>
<div style="position:absolute;left:1391px;top:909px;width:1px;height:3px;background:#a8a8a8"></div>
<div style="position:absolute;left:1408px;top:909px;width:1px;height:3px;background:#a8a8a8"></div>
<div style="position:absolute;left:1443px;top:909px;width:1px;height:3px;background:#a8a8a8"></div>
<div style="position:absolute;left:1461px;top:909px;width:1px;height:3px;background:#a8a8a8"></div>
<div style="position:absolute;left:788.0px;width:400px;text-align:center;top:919.69px;font:normal 11px/11px 'Liberation Sans', sans-serif;color:#1e2238;white-space:nowrap;">Book</div>
<div style="position:absolute;left:875.78px;width:400px;text-align:center;top:919.69px;font:normal 11px/11px 'Liberation Sans', sans-serif;color:#1e2238;white-space:nowrap;">Chapter</div>
<div style="position:absolute;left:963.56px;width:400px;text-align:center;top:919.69px;font:normal 11px/11px 'Liberation Sans', sans-serif;color:#1e2238;white-space:nowrap;">Conference</div>
<div style="position:absolute;left:1051.3400000000001px;width:400px;text-align:center;top:919.69px;font:normal 11px/11px 'Liberation Sans', sans-serif;color:#1e2238;white-space:nowrap;">Journal article</div>
<div style="position:absolute;left:1139.12px;width:400px;text-align:center;top:919.69px;font:normal 11px/11px 'Liberation Sans', sans-serif;color:#1e2238;white-space:nowrap;">Report</div>
<div style="position:absolute;left:1226.9px;width:400px;text-align:center;top:919.69px;font:normal 11px/11px 'Liberation Sans', sans-serif;color:#1e2238;white-space:nowrap;">Scholarly edition</div>
<div style="position:absolute;left:961px;top:868px;width:53px;height:42px;background:#9da1ad;border:1px solid #7f8390;box-sizing:border-box"></div>
<div style="position:absolute;left:961px;top:866px;width:53px;height:3px;background:#5c5780;border:1px solid #46416b;box-sizing:border-box"></div>
<div style="position:absolute;left:961px;top:865px;width:53px;height:2px;background:#5f8a91;border:1px solid #4a7077;box-sizing:border-box"></div>
<div style="position:absolute;left:961px;top:862px;width:53px;height:4px;background:#ae8851;border:1px solid #8e6c3b;box-sizing:border-box"></div>
<div style="position:absolute;left:1048px;top:802px;width:54px;height:108px;background:#9da1ad;border:1px solid #7f8390;box-sizing:border-box"></div>
<div style="position:absolute;left:1048px;top:801px;width:54px;height:2px;background:#5c5780;border:1px solid #46416b;box-sizing:border-box"></div>
<div style="position:absolute;left:1048px;top:788px;width:54px;height:14px;background:#5f8a91;border:1px solid #4a7077;box-sizing:border-box"></div>
<div style="position:absolute;left:1048px;top:781px;width:54px;height:8px;background:#ae8851;border:1px solid #8e6c3b;box-sizing:border-box"></div>
<div style="position:absolute;left:1136px;top:906px;width:53px;height:4px;background:#ae8851;border:1px solid #8e6c3b;box-sizing:border-box"></div>
<div style="position:absolute;left:1224px;top:662px;width:53px;height:248px;background:#9da1ad;border:1px solid #7f8390;box-sizing:border-box"></div>
<div style="position:absolute;left:1224px;top:605px;width:53px;height:58px;background:#5c5780;border:1px solid #46416b;box-sizing:border-box"></div>
<div style="position:absolute;left:1224px;top:496px;width:53px;height:110px;background:#5f8a91;border:1px solid #4a7077;box-sizing:border-box"></div>
<div style="position:absolute;left:1224px;top:404px;width:53px;height:93px;background:#ae8851;border:1px solid #8e6c3b;box-sizing:border-box"></div>
<div style="position:absolute;left:1224px;top:400px;width:53px;height:5px;background:#7e9462;border:1px solid #65794c;box-sizing:border-box"></div>
<div style="position:absolute;left:1224px;top:397px;width:53px;height:4px;background:#e4a652;border:1px solid #c5883a;box-sizing:border-box"></div>
<div style="position:absolute;left:1311px;top:545px;width:54px;height:365px;background:#9da1ad;border:1px solid #7f8390;box-sizing:border-box"></div>
<div style="position:absolute;left:1311px;top:527px;width:54px;height:19px;background:#5c5780;border:1px solid #46416b;box-sizing:border-box"></div>
<div style="position:absolute;left:1311px;top:438px;width:54px;height:90px;background:#5f8a91;border:1px solid #4a7077;box-sizing:border-box"></div>
<div style="position:absolute;left:1311px;top:328px;width:54px;height:111px;background:#ae8851;border:1px solid #8e6c3b;box-sizing:border-box"></div>
<div style="position:absolute;left:1399px;top:827px;width:53px;height:83px;background:#9da1ad;border:1px solid #7f8390;box-sizing:border-box"></div>
<div style="position:absolute;left:1399px;top:825px;width:53px;height:3px;background:#5c5780;border:1px solid #46416b;box-sizing:border-box"></div>
<div style="position:absolute;left:1399px;top:816px;width:53px;height:10px;background:#5f8a91;border:1px solid #4a7077;box-sizing:border-box"></div>
<div style="position:absolute;left:1399px;top:790px;width:53px;height:27px;background:#ae8851;border:1px solid #8e6c3b;box-sizing:border-box"></div>
<div style="position:absolute;left:1494px;top:207.84px;font:bold 12px/12px 'Liberation Sans', sans-serif;color:#1e2238;white-space:nowrap;letter-spacing:-0.2px">Filter Group(s)</div>
<div style="position:absolute;left:1524px;top:227px;width:282px;height:18px;background:#eeeff2"></div>
<svg style="position:absolute;left:1508px;top:230px" width="13" height="13" viewBox="0 0 13 13"><rect x="0.5" y="0.5" width="12" height="12" fill="#fff" stroke="#8f9196" stroke-width="1"/><rect x="1.5" y="1.5" width="10" height="10" fill="none" stroke="#dcdde0" stroke-width="1"/><rect x="2.5" y="2.5" width="8" height="8" fill="#6f8fdc" stroke="#3c5db4" stroke-width="1"/><rect x="3.5" y="3.5" width="6" height="3" fill="#9ab2ee"/></svg>
<div style="position:absolute;left:1528px;top:230.69px;font:normal 11px/11px 'Liberation Sans', sans-serif;color:#1e2238;white-space:nowrap;letter-spacing:-0.1px">(All)</div>
<svg style="position:absolute;left:1508px;top:248px" width="13" height="13" viewBox="0 0 13 13"><rect x="0.5" y="0.5" width="12" height="12" fill="#fff" stroke="#8f9196" stroke-width="1"/><rect x="1.5" y="1.5" width="10" height="10" fill="none" stroke="#dcdde0" stroke-width="1"/><rect x="2.5" y="2.5" width="8" height="8" fill="#6f8fdc" stroke="#3c5db4" stroke-width="1"/><rect x="3.5" y="3.5" width="6" height="3" fill="#9ab2ee"/></svg>
<div style="position:absolute;left:1528px;top:248.69px;font:normal 11px/11px 'Liberation Sans', sans-serif;color:#1e2238;white-space:nowrap;letter-spacing:-0.1px">Lilliput University</div>
<svg style="position:absolute;left:1492px;top:253px" width="9" height="6" viewBox="0 0 9 6"><path d="M0.5 1 L8.5 1 L4.5 5 Z" fill="#6f7380"/></svg>
<svg style="position:absolute;left:1526px;top:266px" width="13" height="13" viewBox="0 0 13 13"><rect x="0.5" y="0.5" width="12" height="12" fill="#fff" stroke="#8f9196" stroke-width="1"/><rect x="1.5" y="1.5" width="10" height="10" fill="none" stroke="#dcdde0" stroke-width="1"/></svg>
<div style="position:absolute;left:1546px;top:266.69px;font:normal 11px/11px 'Liberation Sans', sans-serif;color:#1e2238;white-space:nowrap;letter-spacing:-0.25px">All Faculty/Academics Auto Group</div>
<svg style="position:absolute;left:1526px;top:284px" width="13" height="13" viewBox="0 0 13 13"><rect x="0.5" y="0.5" width="12" height="12" fill="#fff" stroke="#8f9196" stroke-width="1"/><rect x="1.5" y="1.5" width="10" height="10" fill="none" stroke="#dcdde0" stroke-width="1"/></svg>
<div style="position:absolute;left:1546px;top:284.69px;font:normal 11px/11px 'Liberation Sans', sans-serif;color:#1e2238;white-space:nowrap;letter-spacing:-0.25px">Lilliput Centre for Research Excellence</div>
<svg style="position:absolute;left:1526px;top:302px" width="13" height="13" viewBox="0 0 13 13"><rect x="0.5" y="0.5" width="12" height="12" fill="#fff" stroke="#8f9196" stroke-width="1"/><rect x="1.5" y="1.5" width="10" height="10" fill="none" stroke="#dcdde0" stroke-width="1"/></svg>
<div style="position:absolute;left:1546px;top:302.69px;font:normal 11px/11px 'Liberation Sans', sans-serif;color:#1e2238;white-space:nowrap;letter-spacing:-0.25px">Lilliput School of Arts, Humanities and Law</div>
<svg style="position:absolute;left:1512px;top:304px" width="6" height="9" viewBox="0 0 6 9"><path d="M1 0.5 L5 4.5 L1 8.5 Z" fill="#6f7380"/></svg>
<svg style="position:absolute;left:1526px;top:320px" width="13" height="13" viewBox="0 0 13 13"><rect x="0.5" y="0.5" width="12" height="12" fill="#fff" stroke="#8f9196" stroke-width="1"/><rect x="1.5" y="1.5" width="10" height="10" fill="none" stroke="#dcdde0" stroke-width="1"/></svg>
<div style="position:absolute;left:1546px;top:320.69px;font:normal 11px/11px 'Liberation Sans', sans-serif;color:#1e2238;white-space:nowrap;letter-spacing:-0.25px">Lilliput School of Biological and Environmental Science</div>
<svg style="position:absolute;left:1512px;top:322px" width="6" height="9" viewBox="0 0 6 9"><path d="M1 0.5 L5 4.5 L1 8.5 Z" fill="#6f7380"/></svg>
<svg style="position:absolute;left:1526px;top:338px" width="13" height="13" viewBox="0 0 13 13"><rect x="0.5" y="0.5" width="12" height="12" fill="#fff" stroke="#8f9196" stroke-width="1"/><rect x="1.5" y="1.5" width="10" height="10" fill="none" stroke="#dcdde0" stroke-width="1"/></svg>
<svg style="position:absolute;left:1526px;top:335px" width="16" height="16" viewBox="0 0 16 16"><path d="M2 9 L6 14.5 L14 1.5" fill="none" stroke="#23273a" stroke-width="2.2" stroke-linejoin="miter"/></svg>
<div style="position:absolute;left:1546px;top:338.69px;font:normal 11px/11px 'Liberation Sans', sans-serif;color:#1e2238;white-space:nowrap;letter-spacing:-0.25px">Lilliput School of Business</div>
<svg style="position:absolute;left:1512px;top:340px" width="6" height="9" viewBox="0 0 6 9"><path d="M1 0.5 L5 4.5 L1 8.5 Z" fill="#6f7380"/></svg>
<svg style="position:absolute;left:1526px;top:356px" width="13" height="13" viewBox="0 0 13 13"><rect x="0.5" y="0.5" width="12" height="12" fill="#fff" stroke="#8f9196" stroke-width="1"/><rect x="1.5" y="1.5" width="10" height="10" fill="none" stroke="#dcdde0" stroke-width="1"/></svg>
<div style="position:absolute;left:1546px;top:356.69px;font:normal 11px/11px 'Liberation Sans', sans-serif;color:#1e2238;white-space:nowrap;letter-spacing:-0.25px">Lilliput School of Engineering Sciences</div>
<svg style="position:absolute;left:1512px;top:358px" width="6" height="9" viewBox="0 0 6 9"><path d="M1 0.5 L5 4.5 L1 8.5 Z" fill="#6f7380"/></svg>
<svg style="position:absolute;left:1526px;top:374px" width="13" height="13" viewBox="0 0 13 13"><rect x="0.5" y="0.5" width="12" height="12" fill="#fff" stroke="#8f9196" stroke-width="1"/><rect x="1.5" y="1.5" width="10" height="10" fill="none" stroke="#dcdde0" stroke-width="1"/></svg>
<div style="position:absolute;left:1546px;top:374.69px;font:normal 11px/11px 'Liberation Sans', sans-serif;color:#1e2238;white-space:nowrap;letter-spacing:-0.25px">Lilliput School of Health and Medical Sciences</div>
<svg style="position:absolute;left:1512px;top:376px" width="6" height="9" viewBox="0 0 6 9"><path d="M1 0.5 L5 4.5 L1 8.5 Z" fill="#6f7380"/></svg>
<svg style="position:absolute;left:1526px;top:392px" width="13" height="13" viewBox="0 0 13 13"><rect x="0.5" y="0.5" width="12" height="12" fill="#fff" stroke="#8f9196" stroke-width="1"/><rect x="1.5" y="1.5" width="10" height="10" fill="none" stroke="#dcdde0" stroke-width="1"/></svg>
<div style="position:absolute;left:1546px;top:392.69px;font:normal 11px/11px 'Liberation Sans', sans-serif;color:#1e2238;white-space:nowrap;letter-spacing:-0.25px">Lilliput School of Information Sciences</div>
<svg style="position:absolute;left:1512px;top:394px" width="6" height="9" viewBox="0 0 6 9"><path d="M1 0.5 L5 4.5 L1 8.5 Z" fill="#6f7380"/></svg>
<svg style="position:absolute;left:1526px;top:410px" width="13" height="13" viewBox="0 0 13 13"><rect x="0.5" y="0.5" width="12" height="12" fill="#fff" stroke="#8f9196" stroke-width="1"/><rect x="1.5" y="1.5" width="10" height="10" fill="none" stroke="#dcdde0" stroke-width="1"/></svg>
<div style="position:absolute;left:1546px;top:410.69px;font:normal 11px/11px 'Liberation Sans', sans-serif;color:#1e2238;white-space:nowrap;letter-spacing:-0.25px">Lilliput School of Physical Sciences</div>
<svg style="position:absolute;left:1512px;top:412px" width="6" height="9" viewBox="0 0 6 9"><path d="M1 0.5 L5 4.5 L1 8.5 Z" fill="#6f7380"/></svg>
<svg style="position:absolute;left:1526px;top:428px" width="13" height="13" viewBox="0 0 13 13"><rect x="0.5" y="0.5" width="12" height="12" fill="#fff" stroke="#8f9196" stroke-width="1"/><rect x="1.5" y="1.5" width="10" height="10" fill="none" stroke="#dcdde0" stroke-width="1"/></svg>
<div style="position:absolute;left:1546px;top:428.69px;font:normal 11px/11px 'Liberation Sans', sans-serif;color:#1e2238;white-space:nowrap;letter-spacing:-0.25px">Symplectic</div>
<div style="position:absolute;left:1524px;top:574px;width:282px;height:18px;background:#eeeff2"></div>
<svg style="position:absolute;left:1508px;top:577px" width="13" height="13" viewBox="0 0 13 13"><rect x="0.5" y="0.5" width="12" height="12" fill="#fff" stroke="#8f9196" stroke-width="1"/><rect x="1.5" y="1.5" width="10" height="10" fill="none" stroke="#dcdde0" stroke-width="1"/></svg>
<svg style="position:absolute;left:1508px;top:574px" width="16" height="16" viewBox="0 0 16 16"><path d="M2 9 L6 14.5 L14 1.5" fill="none" stroke="#23273a" stroke-width="2.2" stroke-linejoin="miter"/></svg>
<div style="position:absolute;left:1528px;top:577.69px;font:normal 11px/11px 'Liberation Sans', sans-serif;color:#1e2238;white-space:nowrap;">(All)</div>
<svg style="position:absolute;left:1508px;top:595px" width="13" height="13" viewBox="0 0 13 13"><rect x="0.5" y="0.5" width="12" height="12" fill="#fff" stroke="#8f9196" stroke-width="1"/><rect x="1.5" y="1.5" width="10" height="10" fill="none" stroke="#dcdde0" stroke-width="1"/></svg>
<svg style="position:absolute;left:1508px;top:592px" width="16" height="16" viewBox="0 0 16 16"><path d="M2 9 L6 14.5 L14 1.5" fill="none" stroke="#23273a" stroke-width="2.2" stroke-linejoin="miter"/></svg>
<div style="position:absolute;left:1528px;top:595.69px;font:normal 11px/11px 'Liberation Sans', sans-serif;color:#1e2238;white-space:nowrap;">2000</div>
<svg style="position:absolute;left:1508px;top:613px" width="13" height="13" viewBox="0 0 13 13"><rect x="0.5" y="0.5" width="12" height="12" fill="#fff" stroke="#8f9196" stroke-width="1"/><rect x="1.5" y="1.5" width="10" height="10" fill="none" stroke="#dcdde0" stroke-width="1"/></svg>
<svg style="position:absolute;left:1508px;top:610px" width="16" height="16" viewBox="0 0 16 16"><path d="M2 9 L6 14.5 L14 1.5" fill="none" stroke="#23273a" stroke-width="2.2" stroke-linejoin="miter"/></svg>
<div style="position:absolute;left:1528px;top:613.69px;font:normal 11px/11px 'Liberation Sans', sans-serif;color:#1e2238;white-space:nowrap;">2001</div>
<svg style="position:absolute;left:1508px;top:631px" width="13" height="13" viewBox="0 0 13 13"><rect x="0.5" y="0.5" width="12" height="12" fill="#fff" stroke="#8f9196" stroke-width="1"/><rect x="1.5" y="1.5" width="10" height="10" fill="none" stroke="#dcdde0" stroke-width="1"/></svg>
<svg style="position:absolute;left:1508px;top:628px" width="16" height="16" viewBox="0 0 16 16"><path d="M2 9 L6 14.5 L14 1.5" fill="none" stroke="#23273a" stroke-width="2.2" stroke-linejoin="miter"/></svg>
<div style="position:absolute;left:1528px;top:631.69px;font:normal 11px/11px 'Liberation Sans', sans-serif;color:#1e2238;white-space:nowrap;">2002</div>
<svg style="position:absolute;left:1508px;top:649px" width="13" height="13" viewBox="0 0 13 13"><rect x="0.5" y="0.5" width="12" height="12" fill="#fff" stroke="#8f9196" stroke-width="1"/><rect x="1.5" y="1.5" width="10" height="10" fill="none" stroke="#dcdde0" stroke-width="1"/></svg>
<svg style="position:absolute;left:1508px;top:646px" width="16" height="16" viewBox="0 0 16 16"><path d="M2 9 L6 14.5 L14 1.5" fill="none" stroke="#23273a" stroke-width="2.2" stroke-linejoin="miter"/></svg>
<div style="position:absolute;left:1528px;top:649.69px;font:normal 11px/11px 'Liberation Sans', sans-serif;color:#1e2238;white-space:nowrap;">2003</div>
<svg style="position:absolute;left:1508px;top:667px" width="13" height="13" viewBox="0 0 13 13"><rect x="0.5" y="0.5" width="12" height="12" fill="#fff" stroke="#8f9196" stroke-width="1"/><rect x="1.5" y="1.5" width="10" height="10" fill="none" stroke="#dcdde0" stroke-width="1"/></svg>
<svg style="position:absolute;left:1508px;top:664px" width="16" height="16" viewBox="0 0 16 16"><path d="M2 9 L6 14.5 L14 1.5" fill="none" stroke="#23273a" stroke-width="2.2" stroke-linejoin="miter"/></svg>
<div style="position:absolute;left:1528px;top:667.69px;font:normal 11px/11px 'Liberation Sans', sans-serif;color:#1e2238;white-space:nowrap;">2004</div>
<svg style="position:absolute;left:1508px;top:685px" width="13" height="13" viewBox="0 0 13 13"><rect x="0.5" y="0.5" width="12" height="12" fill="#fff" stroke="#8f9196" stroke-width="1"/><rect x="1.5" y="1.5" width="10" height="10" fill="none" stroke="#dcdde0" stroke-width="1"/></svg>
<svg style="position:absolute;left:1508px;top:682px" width="16" height="16" viewBox="0 0 16 16"><path d="M2 9 L6 14.5 L14 1.5" fill="none" stroke="#23273a" stroke-width="2.2" stroke-linejoin="miter"/></svg>
<div style="position:absolute;left:1528px;top:685.69px;font:normal 11px/11px 'Liberation Sans', sans-serif;color:#1e2238;white-space:nowrap;">2005</div>
<svg style="position:absolute;left:1508px;top:703px" width="13" height="13" viewBox="0 0 13 13"><rect x="0.5" y="0.5" width="12" height="12" fill="#fff" stroke="#8f9196" stroke-width="1"/><rect x="1.5" y="1.5" width="10" height="10" fill="none" stroke="#dcdde0" stroke-width="1"/></svg>
<svg style="position:absolute;left:1508px;top:700px" width="16" height="16" viewBox="0 0 16 16"><path d="M2 9 L6 14.5 L14 1.5" fill="none" stroke="#23273a" stroke-width="2.2" stroke-linejoin="miter"/></svg>
<div style="position:absolute;left:1528px;top:703.69px;font:normal 11px/11px 'Liberation Sans', sans-serif;color:#1e2238;white-space:nowrap;">2006</div>
<svg style="position:absolute;left:1508px;top:721px" width="13" height="13" viewBox="0 0 13 13"><rect x="0.5" y="0.5" width="12" height="12" fill="#fff" stroke="#8f9196" stroke-width="1"/><rect x="1.5" y="1.5" width="10" height="10" fill="none" stroke="#dcdde0" stroke-width="1"/></svg>
<svg style="position:absolute;left:1508px;top:718px" width="16" height="16" viewBox="0 0 16 16"><path d="M2 9 L6 14.5 L14 1.5" fill="none" stroke="#23273a" stroke-width="2.2" stroke-linejoin="miter"/></svg>
<div style="position:absolute;left:1528px;top:721.69px;font:normal 11px/11px 'Liberation Sans', sans-serif;color:#1e2238;white-space:nowrap;">2007</div>
<svg style="position:absolute;left:1508px;top:739px" width="13" height="13" viewBox="0 0 13 13"><rect x="0.5" y="0.5" width="12" height="12" fill="#fff" stroke="#8f9196" stroke-width="1"/><rect x="1.5" y="1.5" width="10" height="10" fill="none" stroke="#dcdde0" stroke-width="1"/></svg>
<svg style="position:absolute;left:1508px;top:736px" width="16" height="16" viewBox="0 0 16 16"><path d="M2 9 L6 14.5 L14 1.5" fill="none" stroke="#23273a" stroke-width="2.2" stroke-linejoin="miter"/></svg>
<div style="position:absolute;left:1528px;top:739.69px;font:normal 11px/11px 'Liberation Sans', sans-serif;color:#1e2238;white-space:nowrap;">2008</div>
<svg style="position:absolute;left:1508px;top:757px" width="13" height="13" viewBox="0 0 13 13"><rect x="0.5" y="0.5" width="12" height="12" fill="#fff" stroke="#8f9196" stroke-width="1"/><rect x="1.5" y="1.5" width="10" height="10" fill="none" stroke="#dcdde0" stroke-width="1"/></svg>
<svg style="position:absolute;left:1508px;top:754px" width="16" height="16" viewBox="0 0 16 16"><path d="M2 9 L6 14.5 L14 1.5" fill="none" stroke="#23273a" stroke-width="2.2" stroke-linejoin="miter"/></svg>
<div style="position:absolute;left:1528px;top:757.69px;font:normal 11px/11px 'Liberation Sans', sans-serif;color:#1e2238;white-space:nowrap;">2009</div>
<svg style="position:absolute;left:1508px;top:775px" width="13" height="13" viewBox="0 0 13 13"><rect x="0.5" y="0.5" width="12" height="12" fill="#fff" stroke="#8f9196" stroke-width="1"/><rect x="1.5" y="1.5" width="10" height="10" fill="none" stroke="#dcdde0" stroke-width="1"/></svg>
<svg style="position:absolute;left:1508px;top:772px" width="16" height="16" viewBox="0 0 16 16"><path d="M2 9 L6 14.5 L14 1.5" fill="none" stroke="#23273a" stroke-width="2.2" stroke-linejoin="miter"/></svg>
<div style="position:absolute;left:1528px;top:775.69px;font:normal 11px/11px 'Liberation Sans', sans-serif;color:#1e2238;white-space:nowrap;">2010</div>
<svg style="position:absolute;left:1508px;top:793px" width="13" height="13" viewBox="0 0 13 13"><rect x="0.5" y="0.5" width="12" height="12" fill="#fff" stroke="#8f9196" stroke-width="1"/><rect x="1.5" y="1.5" width="10" height="10" fill="none" stroke="#dcdde0" stroke-width="1"/></svg>
<svg style="position:absolute;left:1508px;top:790px" width="16" height="16" viewBox="0 0 16 16"><path d="M2 9 L6 14.5 L14 1.5" fill="none" stroke="#23273a" stroke-width="2.2" stroke-linejoin="miter"/></svg>
<div style="position:absolute;left:1528px;top:793.69px;font:normal 11px/11px 'Liberation Sans', sans-serif;color:#1e2238;white-space:nowrap;">2011</div>
<svg style="position:absolute;left:1508px;top:811px" width="13" height="13" viewBox="0 0 13 13"><rect x="0.5" y="0.5" width="12" height="12" fill="#fff" stroke="#8f9196" stroke-width="1"/><rect x="1.5" y="1.5" width="10" height="10" fill="none" stroke="#dcdde0" stroke-width="1"/></svg>
<svg style="position:absolute;left:1508px;top:808px" width="16" height="16" viewBox="0 0 16 16"><path d="M2 9 L6 14.5 L14 1.5" fill="none" stroke="#23273a" stroke-width="2.2" stroke-linejoin="miter"/></svg>
<div style="position:absolute;left:1528px;top:811.69px;font:normal 11px/11px 'Liberation Sans', sans-serif;color:#1e2238;white-space:nowrap;">2012</div>
<svg style="position:absolute;left:1508px;top:829px" width="13" height="13" viewBox="0 0 13 13"><rect x="0.5" y="0.5" width="12" height="12" fill="#fff" stroke="#8f9196" stroke-width="1"/><rect x="1.5" y="1.5" width="10" height="10" fill="none" stroke="#dcdde0" stroke-width="1"/></svg>
<svg style="position:absolute;left:1508px;top:826px" width="16" height="16" viewBox="0 0 16 16"><path d="M2 9 L6 14.5 L14 1.5" fill="none" stroke="#23273a" stroke-width="2.2" stroke-linejoin="miter"/></svg>
<div style="position:absolute;left:1528px;top:829.69px;font:normal 11px/11px 'Liberation Sans', sans-serif;color:#1e2238;white-space:nowrap;">2013</div>
<svg style="position:absolute;left:1508px;top:847px" width="13" height="13" viewBox="0 0 13 13"><rect x="0.5" y="0.5" width="12" height="12" fill="#fff" stroke="#8f9196" stroke-width="1"/><rect x="1.5" y="1.5" width="10" height="10" fill="none" stroke="#dcdde0" stroke-width="1"/></svg>
<svg style="position:absolute;left:1508px;top:844px" width="16" height="16" viewBox="0 0 16 16"><path d="M2 9 L6 14.5 L14 1.5" fill="none" stroke="#23273a" stroke-width="2.2" stroke-linejoin="miter"/></svg>
<div style="position:absolute;left:1528px;top:847.69px;font:normal 11px/11px 'Liberation Sans', sans-serif;color:#1e2238;white-space:nowrap;">2014</div>
<svg style="position:absolute;left:1508px;top:865px" width="13" height="13" viewBox="0 0 13 13"><rect x="0.5" y="0.5" width="12" height="12" fill="#fff" stroke="#8f9196" stroke-width="1"/><rect x="1.5" y="1.5" width="10" height="10" fill="none" stroke="#dcdde0" stroke-width="1"/></svg>
<svg style="position:absolute;left:1508px;top:862px" width="16" height="16" viewBox="0 0 16 16"><path d="M2 9 L6 14.5 L14 1.5" fill="none" stroke="#23273a" stroke-width="2.2" stroke-linejoin="miter"/></svg>
<div style="position:absolute;left:1528px;top:865.69px;font:normal 11px/11px 'Liberation Sans', sans-serif;color:#1e2238;white-space:nowrap;">2015</div>
<svg style="position:absolute;left:1508px;top:883px" width="13" height="13" viewBox="0 0 13 13"><rect x="0.5" y="0.5" width="12" height="12" fill="#fff" stroke="#8f9196" stroke-width="1"/><rect x="1.5" y="1.5" width="10" height="10" fill="none" stroke="#dcdde0" stroke-width="1"/></svg>
<svg style="position:absolute;left:1508px;top:880px" width="16" height="16" viewBox="0 0 16 16"><path d="M2 9 L6 14.5 L14 1.5" fill="none" stroke="#23273a" stroke-width="2.2" stroke-linejoin="miter"/></svg>
<div style="position:absolute;left:1528px;top:883.69px;font:normal 11px/11px 'Liberation Sans', sans-serif;color:#1e2238;white-space:nowrap;">2016</div>
<div style="position:absolute;left:10px;top:3px;width:1145px;height:655px;background:#68c8ea;border:1px solid #1c1c1c;border-top:none;box-sizing:border-box"></div>
<div style="position:absolute;left:18px;top:33px;width:1129px;height:500px;background:#fff"></div>
<div style="position:absolute;left:18px;top:533px;width:1129px;height:117px;background:#f0f0f0"></div>
<div style="position:absolute;left:18px;top:70px;width:1129px;height:31px;background:#f0f0f0"></div>
<div style="position:absolute;left:557px;top:10.30px;font:normal 15px/15px 'Liberation Sans', sans-serif;color:#000;white-space:nowrap;letter-spacing:-0.4px">Save As</div>
<div style="position:absolute;left:1115px;top:3px;width:34px;height:21px;background:#c75a4f;border:1px solid #6e2a2a;border-top:none;box-sizing:border-box"></div>
<svg style="position:absolute;left:1128px;top:9px" width="9" height="9" viewBox="0 0 9 9"><path d="M0 0 H3.2 L4.5 2.3 L5.8 0 H9 L6.2 4 L9 8 H5.8 L4.5 5.7 L3.2 8 H0 L2.8 4 Z" fill="#000"/></svg>
<svg style="position:absolute;left:19px;top:9px" width="18" height="16" viewBox="0 0 18 16"><g fill="none" stroke="#d8363c" stroke-width="1.2" opacity="0.85"><path d="M1.4 4.5 L8.9 1.3 L16.4 4.5 L12.6 6.5 L8.9 4.5 L5.3 6.5 Z"/><path d="M1.4 8 H16.4" stroke-dasharray="2 1.5"/><path d="M1.4 11.5 L5.3 9.5 L8.9 11.5 L12.6 9.5 L16.4 11.5 L8.9 14.7 Z"/></g></svg>
<svg style="position:absolute;left:27px;top:41px" width="22" height="20" viewBox="0 0 22 20"><circle cx="10.5" cy="10" r="9" fill="none" stroke="#dadada" stroke-width="1"/><path d="M5.5 10 L9.5 6 L9.5 8.5 L15 8.5 L15 11.5 L9.5 11.5 L9.5 14 Z" fill="none" stroke="#d4d4d4" stroke-width="1"/></svg>
<svg style="position:absolute;left:57px;top:41px" width="22" height="20" viewBox="0 0 22 20"><circle cx="10.5" cy="10" r="9" fill="none" stroke="#dadada" stroke-width="1"/><path d="M15.5 10 L11.5 6 L11.5 8.5 L6 8.5 L6 11.5 L11.5 11.5 L11.5 14 Z" fill="none" stroke="#d4d4d4" stroke-width="1"/></svg>
<svg style="position:absolute;left:86px;top:48px" width="9" height="6" viewBox="0 0 9 6"><path d="M1 1 L8 1 L4.5 5 Z" fill="none" stroke="#d0d0d0" stroke-width="1"/></svg>
<svg style="position:absolute;left:107px;top:44px" width="12" height="15" viewBox="0 0 12 15"><path d="M6 14 L6 2 M1.5 6.5 L6 1.5 L10.5 6.5" fill="none" stroke="#6b6b6b" stroke-width="1.8"/></svg>
<div style="position:absolute;left:125px;top:39px;width:797px;height:24px;background:#fff;border:1px solid #8a8a8a;box-sizing:border-box"></div>
<svg style="position:absolute;left:129px;top:42px" width="15" height="17" viewBox="0 0 15 17"><path d="M1 2 L6 1 L8 3 L8 16 L1 16 Z" fill="#e8c65a"/><path d="M3 3 L13 3 L13 15 L3 16 Z" fill="#f3dc8a" stroke="#c9a53a" stroke-width="0.8"/><path d="M2 1.5 L7 1 L7 16 L2 16.5 Z" fill="#f6e39b" stroke="#c9a53a" stroke-width="0.8"/><rect x="12" y="11" width="1.5" height="3" fill="#5b9bd5"/></svg>
<svg style="position:absolute;left:152px;top:47px" width="6" height="9" viewBox="0 0 6 9"><path d="M1.5 0.5 L5.5 4.5 L1.5 8.5 Z" fill="#000"/></svg>
<svg style="position:absolute;left:215px;top:47px" width="6" height="9" viewBox="0 0 6 9"><path d="M1.5 0.5 L5.5 4.5 L1.5 8.5 Z" fill="#000"/></svg>
<svg style="position:absolute;left:309px;top:47px" width="6" height="9" viewBox="0 0 6 9"><path d="M1.5 0.5 L5.5 4.5 L1.5 8.5 Z" fill="#000"/></svg>
<svg style="position:absolute;left:390px;top:47px" width="6" height="9" viewBox="0 0 6 9"><path d="M1.5 0.5 L5.5 4.5 L1.5 8.5 Z" fill="#000"/></svg>
<svg style="position:absolute;left:462px;top:47px" width="6" height="9" viewBox="0 0 6 9"><path d="M1.5 0.5 L5.5 4.5 L1.5 8.5 Z" fill="#000"/></svg>
<div style="position:absolute;left:166px;top:44.84px;font:normal 12px/12px 'Liberation Sans', sans-serif;color:#000;white-space:nowrap;">This PC</div>
<div style="position:absolute;left:229px;top:44.84px;font:normal 12px/12px 'Liberation Sans', sans-serif;color:#000;white-space:nowrap;">Windows (C:)</div>
<div style="position:absolute;left:323px;top:44.84px;font:normal 12px/12px 'Liberation Sans', sans-serif;color:#000;white-space:nowrap;">Symplectic</div>
<div style="position:absolute;left:404px;top:44.84px;font:normal 12px/12px 'Liberation Sans', sans-serif;color:#000;white-space:nowrap;">Elements</div>
<div style="position:absolute;left:475.5px;top:44.84px;font:normal 12px/12px 'Liberation Sans', sans-serif;color:#000;white-space:nowrap;">dashboards</div>
<svg style="position:absolute;left:883px;top:48px" width="9" height="7" viewBox="0 0 9 7"><path d="M1.2 1.2 L4.5 5 L7.8 1.2" fill="none" stroke="#6b6b6b" stroke-width="1.8"/></svg>
<svg style="position:absolute;left:902px;top:44px" width="14" height="14" viewBox="0 0 14 14"><path d="M11.5 7.5 A4.6 4.6 0 1 1 8.5 3.4" fill="none" stroke="#717171" stroke-width="1.7"/><path d="M7.5 1 L11.2 3.6 L7.8 6.2 Z" fill="#717171"/></svg>
<div style="position:absolute;left:932px;top:39px;width:204px;height:23px;background:#fff;border:1px solid #8a8a8a;box-sizing:border-box"></div>
<div style="position:absolute;left:942px;top:44.84px;font:normal 12px/12px 'Liberation Sans', sans-serif;color:#6d6d6d;white-space:nowrap;letter-spacing:-0.3px">Search dashboards</div>
<svg style="position:absolute;left:1113px;top:43px" width="14" height="14" viewBox="0 0 14 14"><circle cx="8.5" cy="5.5" r="3.6" fill="none" stroke="#777" stroke-width="1.4"/><path d="M6 8 L1.5 12.5" stroke="#777" stroke-width="1.6"/></svg>
<div style="position:absolute;left:32px;top:78.84px;font:normal 12px/12px 'Liberation Sans', sans-serif;color:#000;white-space:nowrap;">Organize</div>
<svg style="position:absolute;left:87px;top:83px" width="8" height="5" viewBox="0 0 8 5"><path d="M0 0 L8 0 L4 4.5 Z" fill="#000"/></svg>
<div style="position:absolute;left:117px;top:78.84px;font:normal 12px/12px 'Liberation Sans', sans-serif;color:#000;white-space:nowrap;">New folder</div>
<svg style="position:absolute;left:1064px;top:77px" width="18" height="14" viewBox="0 0 18 14"><g fill="#fff" stroke="#6a7588" stroke-width="1"><rect x="1.5" y="1.5" width="4" height="4" rx="0.8"/><rect x="1.5" y="5.5" width="4" height="4" rx="0.8"/><rect x="1.5" y="9.5" width="4" height="4" rx="0.8"/></g><rect x="3" y="3" width="1" height="1" fill="#3a8a3a"/><rect x="3" y="7" width="1" height="1" fill="#e02020"/><rect x="3" y="11" width="1" height="1" fill="#2060d0"/><g stroke="#5a6578" stroke-width="1.3"><path d="M7 3.5H11M12.5 3.5H16M7 7.5H11M12.5 7.5H16M7 11.5H11M12.5 11.5H16"/></g></svg>
<svg style="position:absolute;left:1093px;top:83px" width="9" height="5" viewBox="0 0 9 5"><path d="M0 0 L8 0 L4 4.5 Z" fill="#000"/></svg>
<svg style="position:absolute;left:1116px;top:77px" width="16" height="16" viewBox="0 0 16 16"><defs><radialGradient id="hg" cx="0.35" cy="0.3" r="0.8"><stop offset="0" stop-color="#5a9af0"/><stop offset="1" stop-color="#0a3aa8"/></radialGradient></defs><circle cx="8" cy="7.8" r="7" fill="#e8e8e8" stroke="#8a8a8a" stroke-width="1"/><circle cx="8" cy="7.8" r="5.6" fill="url(#hg)"/><text x="8.3" y="12" font-family="Liberation Sans" font-weight="bold" font-size="10.5" fill="#fff" text-anchor="middle">?</text></svg>
<div style="position:absolute;left:176px;top:101px;width:1px;height:432px;background:#f0f0f0"></div>
<div style="position:absolute;left:19px;top:341px;width:156px;height:21px;background:#f0f0f0;border:1px solid #dadada;box-sizing:border-box"></div>
<div style="position:absolute;left:59px;top:114.84px;font:normal 12px/12px 'Liberation Sans', sans-serif;color:#000;white-space:nowrap;">Favorites</div>
<svg style="position:absolute;left:37px;top:112px" width="16" height="16" viewBox="0 0 16 16"><path d="M8 0.5 L10.2 5.6 L15.5 6 L11.5 9.6 L12.7 15 L8 12.2 L3.3 15 L4.5 9.6 L0.5 6 L5.8 5.6 Z" fill="#ffc94a" stroke="#e8862a" stroke-width="1"/></svg>
<div style="position:absolute;left:69px;top:135.84px;font:normal 12px/12px 'Liberation Sans', sans-serif;color:#000;white-space:nowrap;">Desktop</div>
<svg style="position:absolute;left:48px;top:136px" width="16" height="14" viewBox="0 0 16 14"><rect x="0.5" y="1" width="15" height="11" fill="#3b73c8" stroke="#2a4f8f" stroke-width="1"/><rect x="2" y="2.5" width="12" height="6" fill="#5e95de"/><rect x="0.5" y="10" width="15" height="2" fill="#37415a"/></svg>
<div style="position:absolute;left:69px;top:156.84px;font:normal 12px/12px 'Liberation Sans', sans-serif;color:#000;white-space:nowrap;">Recent places</div>
<svg style="position:absolute;left:48px;top:155px" width="16" height="16" viewBox="0 0 16 16"><rect x="3" y="3" width="11" height="9" fill="#e9eef3" stroke="#8a96a3" stroke-width="1"/><circle cx="4" cy="4" r="3" fill="#fff" stroke="#777" stroke-width="0.8"/><rect x="7" y="6" width="5" height="4" fill="#6aa3d8"/><rect x="2" y="12" width="13" height="3" fill="#b4bac2" stroke="#7d848c" stroke-width="0.8"/></svg>
<div style="position:absolute;left:59px;top:199.34px;font:normal 12px/12px 'Liberation Sans', sans-serif;color:#000;white-space:nowrap;">This PC</div>
<svg style="position:absolute;left:37px;top:197px" width="17" height="15" viewBox="0 0 17 15"><rect x="4" y="0.5" width="12" height="9" fill="#2f5fc9" stroke="#555" stroke-width="1"/><rect x="5.5" y="2" width="6" height="6" fill="#1f3faa"/><rect x="8.5" y="10" width="3" height="2" fill="#888"/><rect x="6" y="12" width="8" height="1.6" fill="#999"/><rect x="0.5" y="4" width="2.5" height="10" fill="#cfd3d6" stroke="#6f7479" stroke-width="0.8"/><rect x="1.2" y="6" width="1.2" height="1" fill="#3c3"/></svg>
<div style="position:absolute;left:69px;top:220.34px;font:normal 12px/12px 'Liberation Sans', sans-serif;color:#000;white-space:nowrap;">Desktop</div>
<svg style="position:absolute;left:48px;top:217px" width="16" height="16" viewBox="0 0 16 16"><path d="M1 1.5 L6 0.5 L7 15 L1.5 15.5 Z" fill="#e7c45a"/><path d="M2.5 3 L13 3 L13 14.5 L2.5 15 Z" fill="#f7e49e" stroke="#c8a43a" stroke-width="0.7"/><path d="M1.5 1.5 L6 1 L6 15 L1.5 15.5 Z" fill="#f3dc88" stroke="#c8a43a" stroke-width="0.7"/><rect x="6" y="8" width="8" height="6" fill="#2f6ed0" stroke="#333" stroke-width="0.6"/></svg>
<div style="position:absolute;left:69px;top:241.34px;font:normal 12px/12px 'Liberation Sans', sans-serif;color:#000;white-space:nowrap;">Documents</div>
<svg style="position:absolute;left:48px;top:238px" width="16" height="16" viewBox="0 0 16 16"><path d="M1 1.5 L6 0.5 L7 15 L1.5 15.5 Z" fill="#e7c45a"/><path d="M2.5 3 L13 3 L13 14.5 L2.5 15 Z" fill="#f7e49e" stroke="#c8a43a" stroke-width="0.7"/><path d="M1.5 1.5 L6 1 L6 15 L1.5 15.5 Z" fill="#f3dc88" stroke="#c8a43a" stroke-width="0.7"/><rect x="7" y="3" width="6" height="9" fill="#fff" stroke="#8aa" stroke-width="0.6"/><path d="M8 5H12M8 7H12M8 9H12" stroke="#5a8ad0" stroke-width="0.6"/></svg>
<div style="position:absolute;left:69px;top:262.34px;font:normal 12px/12px 'Liberation Sans', sans-serif;color:#000;white-space:nowrap;">Downloads</div>
<svg style="position:absolute;left:48px;top:259px" width="16" height="16" viewBox="0 0 16 16"><path d="M1 1.5 L6 0.5 L7 15 L1.5 15.5 Z" fill="#e7c45a"/><path d="M2.5 3 L13 3 L13 14.5 L2.5 15 Z" fill="#f7e49e" stroke="#c8a43a" stroke-width="0.7"/><path d="M1.5 1.5 L6 1 L6 15 L1.5 15.5 Z" fill="#f3dc88" stroke="#c8a43a" stroke-width="0.7"/><path d="M9 6 L9 10 L7 10 L10.5 14.5 L14 10 L12 10 L12 6 Z" fill="#2f7fe0"/></svg>
<div style="position:absolute;left:69px;top:283.34px;font:normal 12px/12px 'Liberation Sans', sans-serif;color:#000;white-space:nowrap;">Music</div>
<svg style="position:absolute;left:48px;top:280px" width="16" height="16" viewBox="0 0 16 16"><path d="M1 1.5 L6 0.5 L7 15 L1.5 15.5 Z" fill="#e7c45a"/><path d="M2.5 3 L13 3 L13 14.5 L2.5 15 Z" fill="#f7e49e" stroke="#c8a43a" stroke-width="0.7"/><path d="M1.5 1.5 L6 1 L6 15 L1.5 15.5 Z" fill="#f3dc88" stroke="#c8a43a" stroke-width="0.7"/><path d="M9 3 L9 12 M9 3 Q13 5 11 9" stroke="#3b7fd0" stroke-width="1.4" fill="none"/><circle cx="8" cy="12" r="2" fill="#3b7fd0"/></svg>
<div style="position:absolute;left:69px;top:304.34px;font:normal 12px/12px 'Liberation Sans', sans-serif;color:#000;white-space:nowrap;">Pictures</div>
<svg style="position:absolute;left:48px;top:301px" width="16" height="16" viewBox="0 0 16 16"><path d="M1 1.5 L6 0.5 L7 15 L1.5 15.5 Z" fill="#e7c45a"/><path d="M2.5 3 L13 3 L13 14.5 L2.5 15 Z" fill="#f7e49e" stroke="#c8a43a" stroke-width="0.7"/><path d="M1.5 1.5 L6 1 L6 15 L1.5 15.5 Z" fill="#f3dc88" stroke="#c8a43a" stroke-width="0.7"/><rect x="7" y="4" width="7" height="7" fill="#fff" stroke="#888" stroke-width="0.6"/><rect x="8" y="7" width="5" height="3" fill="#5ab"/></svg>
<div style="position:absolute;left:69px;top:325.34px;font:normal 12px/12px 'Liberation Sans', sans-serif;color:#000;white-space:nowrap;">Videos</div>
<svg style="position:absolute;left:48px;top:322px" width="16" height="16" viewBox="0 0 16 16"><path d="M1 1.5 L6 0.5 L7 15 L1.5 15.5 Z" fill="#e7c45a"/><path d="M2.5 3 L13 3 L13 14.5 L2.5 15 Z" fill="#f7e49e" stroke="#c8a43a" stroke-width="0.7"/><path d="M1.5 1.5 L6 1 L6 15 L1.5 15.5 Z" fill="#f3dc88" stroke="#c8a43a" stroke-width="0.7"/><rect x="8" y="3" width="6" height="11" fill="#3d4a57"/><rect x="9.5" y="4" width="3" height="4" fill="#6bb6e6"/><rect x="9.5" y="9" width="3" height="4" fill="#6bb6e6"/></svg>
<div style="position:absolute;left:69px;top:345.84px;font:normal 12px/12px 'Liberation Sans', sans-serif;color:#000;white-space:nowrap;">Windows (C:)</div>
<svg style="position:absolute;left:48px;top:343px" width="16" height="17" viewBox="0 0 16 17"><rect x="1" y="0" width="4" height="4" fill="#10b8f0"/><rect x="6" y="0" width="4" height="4" fill="#10b8f0"/><rect x="1" y="5" width="4" height="4" fill="#10b8f0"/><rect x="6" y="5" width="4" height="4" fill="#10b8f0"/><rect x="0.5" y="9.5" width="15" height="6" rx="1.5" fill="#5f7a90" stroke="#444" stroke-width="0.8"/><rect x="2" y="11" width="12" height="3" fill="#3b6a92"/><rect x="12.5" y="11.5" width="1" height="2" fill="#4f4"/></svg>
<div style="position:absolute;left:59px;top:387.84px;font:normal 12px/12px 'Liberation Sans', sans-serif;color:#000;white-space:nowrap;">Network</div>
<svg style="position:absolute;left:37px;top:385px" width="17" height="17" viewBox="0 0 17 17"><circle cx="5.5" cy="6" r="5" fill="#2a9be8"/><path d="M2 4 Q5 2 6 5 Q4 8 2 7 Z M6 9 Q9 8 9 11 L6 11 Z" fill="#43c34a"/><rect x="7" y="5" width="9" height="8" fill="#1b3fd0" stroke="#333" stroke-width="0.6"/><rect x="11" y="13" width="1" height="2" fill="#555"/><rect x="9" y="15" width="5" height="1" fill="#555"/></svg>
<div style="position:absolute;left:178px;top:101px;width:592px;height:25px;background:#fcfcfc;border-bottom:1px solid #e5e5e5;box-sizing:border-box"></div>
<div style="position:absolute;left:449px;top:101px;width:1px;height:24px;background:#e5e5e5"></div>
<div style="position:absolute;left:569px;top:101px;width:1px;height:24px;background:#e5e5e5"></div>
<div style="position:absolute;left:689px;top:101px;width:1px;height:24px;background:#e5e5e5"></div>
<div style="position:absolute;left:769px;top:101px;width:1px;height:24px;background:#e5e5e5"></div>
<div style="position:absolute;left:195.5px;top:107.84px;font:normal 12px/12px 'Liberation Sans', sans-serif;color:#4c607a;white-space:nowrap;">Name</div>
<div style="position:absolute;left:456.5px;top:107.84px;font:normal 12px/12px 'Liberation Sans', sans-serif;color:#4c607a;white-space:nowrap;">Date modified</div>
<div style="position:absolute;left:576px;top:107.84px;font:normal 12px/12px 'Liberation Sans', sans-serif;color:#4c607a;white-space:nowrap;">Type</div>
<div style="position:absolute;left:695.5px;top:107.84px;font:normal 12px/12px 'Liberation Sans', sans-serif;color:#4c607a;white-space:nowrap;">Size</div>
<svg style="position:absolute;left:506px;top:101px" width="8" height="5" viewBox="0 0 8 5"><path d="M0.5 4.5 L4 1 L7.5 4.5 Z" fill="#4c607a"/></svg>
<svg style="position:absolute;left:198px;top:134px" width="14" height="17" viewBox="0 0 14 17"><path d="M0.5 1.5 H10 L12.5 4 V15.5 H0.5 Z" fill="#fff" stroke="#8a8a8a" stroke-width="1"/><path d="M12.5 4 V15.5 H0.5" fill="none" stroke="#6a6a6a" stroke-width="1"/><path d="M2 4.5H11M2 6.5H11M2 8.5H11M2 10.5H11M2 12.5H11M2 14.5H11" stroke="#b4c2d6" stroke-width="1"/><path d="M1 1.5 Q2 0 3 1.5 Q4 0 5 1.5 Q6 0 7 1.5 Q8 0 9 1.5" stroke="#9a9a9a" stroke-width="0.8" fill="none"/></svg>
<div style="position:absolute;left:216px;top:136.84px;font:normal 12px/12px 'Liberation Sans', sans-serif;color:#000;white-space:nowrap;">test-pie.xml</div>
<div style="position:absolute;left:456px;top:136.84px;font:normal 12px/12px 'Liberation Sans', sans-serif;color:#6d6d6d;white-space:nowrap;letter-spacing:-0.3px">17/05/2016 11:44</div>
<div style="position:absolute;left:576px;top:136.84px;font:normal 12px/12px 'Liberation Sans', sans-serif;color:#6d6d6d;white-space:nowrap;">XML File</div>
<div style="position:absolute;right:1065px;top:136.84px;font:normal 12px/12px 'Liberation Sans', sans-serif;color:#6d6d6d;white-space:nowrap;text-align:right;">8 KB</div>
<svg style="position:absolute;left:198px;top:155px" width="14" height="17" viewBox="0 0 14 17"><path d="M0.5 1.5 H10 L12.5 4 V15.5 H0.5 Z" fill="#fff" stroke="#8a8a8a" stroke-width="1"/><path d="M12.5 4 V15.5 H0.5" fill="none" stroke="#6a6a6a" stroke-width="1"/><path d="M2 4.5H11M2 6.5H11M2 8.5H11M2 10.5H11M2 12.5H11M2 14.5H11" stroke="#b4c2d6" stroke-width="1"/><path d="M1 1.5 Q2 0 3 1.5 Q4 0 5 1.5 Q6 0 7 1.5 Q8 0 9 1.5" stroke="#9a9a9a" stroke-width="0.8" fill="none"/></svg>
<div style="position:absolute;left:216px;top:157.84px;font:normal 12px/12px 'Liberation Sans', sans-serif;color:#000;white-space:nowrap;">pie2.xml</div>
<div style="position:absolute;left:456px;top:157.84px;font:normal 12px/12px 'Liberation Sans', sans-serif;color:#6d6d6d;white-space:nowrap;letter-spacing:-0.3px">17/05/2016 15:18</div>
<div style="position:absolute;left:576px;top:157.84px;font:normal 12px/12px 'Liberation Sans', sans-serif;color:#6d6d6d;white-space:nowrap;">XML File</div>
<div style="position:absolute;right:1065px;top:157.84px;font:normal 12px/12px 'Liberation Sans', sans-serif;color:#6d6d6d;white-space:nowrap;text-align:right;">9 KB</div>
<svg style="position:absolute;left:198px;top:176px" width="14" height="17" viewBox="0 0 14 17"><path d="M0.5 1.5 H10 L12.5 4 V15.5 H0.5 Z" fill="#fff" stroke="#8a8a8a" stroke-width="1"/><path d="M12.5 4 V15.5 H0.5" fill="none" stroke="#6a6a6a" stroke-width="1"/><path d="M2 4.5H11M2 6.5H11M2 8.5H11M2 10.5H11M2 12.5H11M2 14.5H11" stroke="#b4c2d6" stroke-width="1"/><path d="M1 1.5 Q2 0 3 1.5 Q4 0 5 1.5 Q6 0 7 1.5 Q8 0 9 1.5" stroke="#9a9a9a" stroke-width="0.8" fill="none"/></svg>
<div style="position:absolute;left:216px;top:178.84px;font:normal 12px/12px 'Liberation Sans', sans-serif;color:#000;white-space:nowrap;">bar1.xml</div>
<div style="position:absolute;left:456px;top:178.84px;font:normal 12px/12px 'Liberation Sans', sans-serif;color:#6d6d6d;white-space:nowrap;letter-spacing:-0.3px">17/05/2016 16:01</div>
<div style="position:absolute;left:576px;top:178.84px;font:normal 12px/12px 'Liberation Sans', sans-serif;color:#6d6d6d;white-space:nowrap;">XML File</div>
<div style="position:absolute;right:1065px;top:178.84px;font:normal 12px/12px 'Liberation Sans', sans-serif;color:#6d6d6d;white-space:nowrap;text-align:right;">18 KB</div>
<svg style="position:absolute;left:198px;top:197px" width="14" height="17" viewBox="0 0 14 17"><path d="M0.5 1.5 H10 L12.5 4 V15.5 H0.5 Z" fill="#fff" stroke="#8a8a8a" stroke-width="1"/><path d="M12.5 4 V15.5 H0.5" fill="none" stroke="#6a6a6a" stroke-width="1"/><path d="M2 4.5H11M2 6.5H11M2 8.5H11M2 10.5H11M2 12.5H11M2 14.5H11" stroke="#b4c2d6" stroke-width="1"/><path d="M1 1.5 Q2 0 3 1.5 Q4 0 5 1.5 Q6 0 7 1.5 Q8 0 9 1.5" stroke="#9a9a9a" stroke-width="0.8" fill="none"/></svg>
<div style="position:absolute;left:216px;top:199.84px;font:normal 12px/12px 'Liberation Sans', sans-serif;color:#000;white-space:nowrap;">00-research-outputs-template.xml</div>
<div style="position:absolute;left:456px;top:199.84px;font:normal 12px/12px 'Liberation Sans', sans-serif;color:#6d6d6d;white-space:nowrap;letter-spacing:-0.3px">19/05/2016 15:19</div>
<div style="position:absolute;left:576px;top:199.84px;font:normal 12px/12px 'Liberation Sans', sans-serif;color:#6d6d6d;white-space:nowrap;">XML File</div>
<div style="position:absolute;right:1065px;top:199.84px;font:normal 12px/12px 'Liberation Sans', sans-serif;color:#6d6d6d;white-space:nowrap;text-align:right;">21 KB</div>
<svg style="position:absolute;left:198px;top:218px" width="14" height="17" viewBox="0 0 14 17"><path d="M0.5 1.5 H10 L12.5 4 V15.5 H0.5 Z" fill="#fff" stroke="#8a8a8a" stroke-width="1"/><path d="M12.5 4 V15.5 H0.5" fill="none" stroke="#6a6a6a" stroke-width="1"/><path d="M2 4.5H11M2 6.5H11M2 8.5H11M2 10.5H11M2 12.5H11M2 14.5H11" stroke="#b4c2d6" stroke-width="1"/><path d="M1 1.5 Q2 0 3 1.5 Q4 0 5 1.5 Q6 0 7 1.5 Q8 0 9 1.5" stroke="#9a9a9a" stroke-width="0.8" fill="none"/></svg>
<div style="position:absolute;left:216px;top:220.84px;font:normal 12px/12px 'Liberation Sans', sans-serif;color:#000;white-space:nowrap;">02-research-outputs-quality.xml</div>
<div style="position:absolute;left:456px;top:220.84px;font:normal 12px/12px 'Liberation Sans', sans-serif;color:#6d6d6d;white-space:nowrap;letter-spacing:-0.3px">19/05/2016 15:19</div>
<div style="position:absolute;left:576px;top:220.84px;font:normal 12px/12px 'Liberation Sans', sans-serif;color:#6d6d6d;white-space:nowrap;">XML File</div>
<div style="position:absolute;right:1065px;top:220.84px;font:normal 12px/12px 'Liberation Sans', sans-serif;color:#6d6d6d;white-space:nowrap;text-align:right;">39 KB</div>
<svg style="position:absolute;left:198px;top:239px" width="14" height="17" viewBox="0 0 14 17"><path d="M0.5 1.5 H10 L12.5 4 V15.5 H0.5 Z" fill="#fff" stroke="#8a8a8a" stroke-width="1"/><path d="M12.5 4 V15.5 H0.5" fill="none" stroke="#6a6a6a" stroke-width="1"/><path d="M2 4.5H11M2 6.5H11M2 8.5H11M2 10.5H11M2 12.5H11M2 14.5H11" stroke="#b4c2d6" stroke-width="1"/><path d="M1 1.5 Q2 0 3 1.5 Q4 0 5 1.5 Q6 0 7 1.5 Q8 0 9 1.5" stroke="#9a9a9a" stroke-width="0.8" fill="none"/></svg>
<div style="position:absolute;left:216px;top:241.84px;font:normal 12px/12px 'Liberation Sans', sans-serif;color:#000;white-space:nowrap;">dashboards.xml</div>
<div style="position:absolute;left:456px;top:241.84px;font:normal 12px/12px 'Liberation Sans', sans-serif;color:#6d6d6d;white-space:nowrap;letter-spacing:-0.3px">19/05/2016 15:19</div>
<div style="position:absolute;left:576px;top:241.84px;font:normal 12px/12px 'Liberation Sans', sans-serif;color:#6d6d6d;white-space:nowrap;">XML File</div>
<div style="position:absolute;right:1065px;top:241.84px;font:normal 12px/12px 'Liberation Sans', sans-serif;color:#6d6d6d;white-space:nowrap;text-align:right;">4 KB</div>
<svg style="position:absolute;left:198px;top:260px" width="14" height="17" viewBox="0 0 14 17"><path d="M0.5 1.5 H10 L12.5 4 V15.5 H0.5 Z" fill="#fff" stroke="#8a8a8a" stroke-width="1"/><path d="M12.5 4 V15.5 H0.5" fill="none" stroke="#6a6a6a" stroke-width="1"/><path d="M2 4.5H11M2 6.5H11M2 8.5H11M2 10.5H11M2 12.5H11M2 14.5H11" stroke="#b4c2d6" stroke-width="1"/><path d="M1 1.5 Q2 0 3 1.5 Q4 0 5 1.5 Q6 0 7 1.5 Q8 0 9 1.5" stroke="#9a9a9a" stroke-width="0.8" fill="none"/></svg>
<div style="position:absolute;left:216px;top:262.84px;font:normal 12px/12px 'Liberation Sans', sans-serif;color:#000;white-space:nowrap;">frequent-journal-titles.xml</div>
<div style="position:absolute;left:456px;top:262.84px;font:normal 12px/12px 'Liberation Sans', sans-serif;color:#6d6d6d;white-space:nowrap;letter-spacing:-0.3px">19/05/2016 15:19</div>
<div style="position:absolute;left:576px;top:262.84px;font:normal 12px/12px 'Liberation Sans', sans-serif;color:#6d6d6d;white-space:nowrap;">XML File</div>
<div style="position:absolute;right:1065px;top:262.84px;font:normal 12px/12px 'Liberation Sans', sans-serif;color:#6d6d6d;white-space:nowrap;text-align:right;">43 KB</div>
<svg style="position:absolute;left:198px;top:281px" width="14" height="17" viewBox="0 0 14 17"><path d="M0.5 1.5 H10 L12.5 4 V15.5 H0.5 Z" fill="#fff" stroke="#8a8a8a" stroke-width="1"/><path d="M12.5 4 V15.5 H0.5" fill="none" stroke="#6a6a6a" stroke-width="1"/><path d="M2 4.5H11M2 6.5H11M2 8.5H11M2 10.5H11M2 12.5H11M2 14.5H11" stroke="#b4c2d6" stroke-width="1"/><path d="M1 1.5 Q2 0 3 1.5 Q4 0 5 1.5 Q6 0 7 1.5 Q8 0 9 1.5" stroke="#9a9a9a" stroke-width="0.8" fill="none"/></svg>
<div style="position:absolute;left:216px;top:283.84px;font:normal 12px/12px 'Liberation Sans', sans-serif;color:#000;white-space:nowrap;">grants-with-linked-publications.xml</div>
<div style="position:absolute;left:456px;top:283.84px;font:normal 12px/12px 'Liberation Sans', sans-serif;color:#6d6d6d;white-space:nowrap;letter-spacing:-0.3px">19/05/2016 15:19</div>
<div style="position:absolute;left:576px;top:283.84px;font:normal 12px/12px 'Liberation Sans', sans-serif;color:#6d6d6d;white-space:nowrap;">XML File</div>
<div style="position:absolute;right:1065px;top:283.84px;font:normal 12px/12px 'Liberation Sans', sans-serif;color:#6d6d6d;white-space:nowrap;text-align:right;">40 KB</div>
<svg style="position:absolute;left:198px;top:302px" width="14" height="17" viewBox="0 0 14 17"><path d="M0.5 1.5 H10 L12.5 4 V15.5 H0.5 Z" fill="#fff" stroke="#8a8a8a" stroke-width="1"/><path d="M12.5 4 V15.5 H0.5" fill="none" stroke="#6a6a6a" stroke-width="1"/><path d="M2 4.5H11M2 6.5H11M2 8.5H11M2 10.5H11M2 12.5H11M2 14.5H11" stroke="#b4c2d6" stroke-width="1"/><path d="M1 1.5 Q2 0 3 1.5 Q4 0 5 1.5 Q6 0 7 1.5 Q8 0 9 1.5" stroke="#9a9a9a" stroke-width="0.8" fill="none"/></svg>
<div style="position:absolute;left:216px;top:304.84px;font:normal 12px/12px 'Liberation Sans', sans-serif;color:#000;white-space:nowrap;">research-output-by-type.xml</div>
<div style="position:absolute;left:456px;top:304.84px;font:normal 12px/12px 'Liberation Sans', sans-serif;color:#6d6d6d;white-space:nowrap;letter-spacing:-0.3px">19/05/2016 15:19</div>
<div style="position:absolute;left:576px;top:304.84px;font:normal 12px/12px 'Liberation Sans', sans-serif;color:#6d6d6d;white-space:nowrap;">XML File</div>
<div style="position:absolute;right:1065px;top:304.84px;font:normal 12px/12px 'Liberation Sans', sans-serif;color:#6d6d6d;white-space:nowrap;text-align:right;">31 KB</div>
<svg style="position:absolute;left:198px;top:323px" width="14" height="17" viewBox="0 0 14 17"><path d="M0.5 1.5 H10 L12.5 4 V15.5 H0.5 Z" fill="#fff" stroke="#8a8a8a" stroke-width="1"/><path d="M12.5 4 V15.5 H0.5" fill="none" stroke="#6a6a6a" stroke-width="1"/><path d="M2 4.5H11M2 6.5H11M2 8.5H11M2 10.5H11M2 12.5H11M2 14.5H11" stroke="#b4c2d6" stroke-width="1"/><path d="M1 1.5 Q2 0 3 1.5 Q4 0 5 1.5 Q6 0 7 1.5 Q8 0 9 1.5" stroke="#9a9a9a" stroke-width="0.8" fill="none"/></svg>
<div style="position:absolute;left:216px;top:325.84px;font:normal 12px/12px 'Liberation Sans', sans-serif;color:#000;white-space:nowrap;">research-outputs-collaboration-by-coun...</div>
<div style="position:absolute;left:456px;top:325.84px;font:normal 12px/12px 'Liberation Sans', sans-serif;color:#6d6d6d;white-space:nowrap;letter-spacing:-0.3px">19/05/2016 15:19</div>
<div style="position:absolute;left:576px;top:325.84px;font:normal 12px/12px 'Liberation Sans', sans-serif;color:#6d6d6d;white-space:nowrap;">XML File</div>
<div style="position:absolute;right:1065px;top:325.84px;font:normal 12px/12px 'Liberation Sans', sans-serif;color:#6d6d6d;white-space:nowrap;text-align:right;">53 KB</div>
<svg style="position:absolute;left:198px;top:344px" width="14" height="17" viewBox="0 0 14 17"><path d="M0.5 1.5 H10 L12.5 4 V15.5 H0.5 Z" fill="#fff" stroke="#8a8a8a" stroke-width="1"/><path d="M12.5 4 V15.5 H0.5" fill="none" stroke="#6a6a6a" stroke-width="1"/><path d="M2 4.5H11M2 6.5H11M2 8.5H11M2 10.5H11M2 12.5H11M2 14.5H11" stroke="#b4c2d6" stroke-width="1"/><path d="M1 1.5 Q2 0 3 1.5 Q4 0 5 1.5 Q6 0 7 1.5 Q8 0 9 1.5" stroke="#9a9a9a" stroke-width="0.8" fill="none"/></svg>
<div style="position:absolute;left:216px;top:346.84px;font:normal 12px/12px 'Liberation Sans', sans-serif;color:#000;white-space:nowrap;">research-outputs-collaboration-by-depa...</div>
<div style="position:absolute;left:456px;top:346.84px;font:normal 12px/12px 'Liberation Sans', sans-serif;color:#6d6d6d;white-space:nowrap;letter-spacing:-0.3px">19/05/2016 15:19</div>
<div style="position:absolute;left:576px;top:346.84px;font:normal 12px/12px 'Liberation Sans', sans-serif;color:#6d6d6d;white-space:nowrap;">XML File</div>
<div style="position:absolute;right:1065px;top:346.84px;font:normal 12px/12px 'Liberation Sans', sans-serif;color:#6d6d6d;white-space:nowrap;text-align:right;">33 KB</div>
<svg style="position:absolute;left:198px;top:365px" width="14" height="17" viewBox="0 0 14 17"><path d="M0.5 1.5 H10 L12.5 4 V15.5 H0.5 Z" fill="#fff" stroke="#8a8a8a" stroke-width="1"/><path d="M12.5 4 V15.5 H0.5" fill="none" stroke="#6a6a6a" stroke-width="1"/><path d="M2 4.5H11M2 6.5H11M2 8.5H11M2 10.5H11M2 12.5H11M2 14.5H11" stroke="#b4c2d6" stroke-width="1"/><path d="M1 1.5 Q2 0 3 1.5 Q4 0 5 1.5 Q6 0 7 1.5 Q8 0 9 1.5" stroke="#9a9a9a" stroke-width="0.8" fill="none"/></svg>
<div style="position:absolute;left:216px;top:367.84px;font:normal 12px/12px 'Liberation Sans', sans-serif;color:#000;white-space:nowrap;">research-outputs-group-comparison.xml</div>
<div style="position:absolute;left:456px;top:367.84px;font:normal 12px/12px 'Liberation Sans', sans-serif;color:#6d6d6d;white-space:nowrap;letter-spacing:-0.3px">19/05/2016 15:19</div>
<div style="position:absolute;left:576px;top:367.84px;font:normal 12px/12px 'Liberation Sans', sans-serif;color:#6d6d6d;white-space:nowrap;">XML File</div>
<div style="position:absolute;right:1065px;top:367.84px;font:normal 12px/12px 'Liberation Sans', sans-serif;color:#6d6d6d;white-space:nowrap;text-align:right;">42 KB</div>
<svg style="position:absolute;left:198px;top:386px" width="14" height="17" viewBox="0 0 14 17"><path d="M0.5 1.5 H10 L12.5 4 V15.5 H0.5 Z" fill="#fff" stroke="#8a8a8a" stroke-width="1"/><path d="M12.5 4 V15.5 H0.5" fill="none" stroke="#6a6a6a" stroke-width="1"/><path d="M2 4.5H11M2 6.5H11M2 8.5H11M2 10.5H11M2 12.5H11M2 14.5H11" stroke="#b4c2d6" stroke-width="1"/><path d="M1 1.5 Q2 0 3 1.5 Q4 0 5 1.5 Q6 0 7 1.5 Q8 0 9 1.5" stroke="#9a9a9a" stroke-width="0.8" fill="none"/></svg>
<div style="position:absolute;left:216px;top:388.84px;font:normal 12px/12px 'Liberation Sans', sans-serif;color:#000;white-space:nowrap;">research-outputs-volume.xml</div>
<div style="position:absolute;left:456px;top:388.84px;font:normal 12px/12px 'Liberation Sans', sans-serif;color:#6d6d6d;white-space:nowrap;letter-spacing:-0.3px">19/05/2016 15:19</div>
<div style="position:absolute;left:576px;top:388.84px;font:normal 12px/12px 'Liberation Sans', sans-serif;color:#6d6d6d;white-space:nowrap;">XML File</div>
<div style="position:absolute;right:1065px;top:388.84px;font:normal 12px/12px 'Liberation Sans', sans-serif;color:#6d6d6d;white-space:nowrap;text-align:right;">33 KB</div>
<svg style="position:absolute;left:198px;top:407px" width="14" height="17" viewBox="0 0 14 17"><path d="M0.5 1.5 H10 L12.5 4 V15.5 H0.5 Z" fill="#fff" stroke="#8a8a8a" stroke-width="1"/><path d="M12.5 4 V15.5 H0.5" fill="none" stroke="#6a6a6a" stroke-width="1"/><path d="M2 4.5H11M2 6.5H11M2 8.5H11M2 10.5H11M2 12.5H11M2 14.5H11" stroke="#b4c2d6" stroke-width="1"/><path d="M1 1.5 Q2 0 3 1.5 Q4 0 5 1.5 Q6 0 7 1.5 Q8 0 9 1.5" stroke="#9a9a9a" stroke-width="0.8" fill="none"/></svg>
<div style="position:absolute;left:216px;top:409.84px;font:normal 12px/12px 'Liberation Sans', sans-serif;color:#000;white-space:nowrap;">grant-history.xml</div>
<div style="position:absolute;left:456px;top:409.84px;font:normal 12px/12px 'Liberation Sans', sans-serif;color:#6d6d6d;white-space:nowrap;letter-spacing:-0.3px">19/05/2016 16:03</div>
<div style="position:absolute;left:576px;top:409.84px;font:normal 12px/12px 'Liberation Sans', sans-serif;color:#6d6d6d;white-space:nowrap;">XML File</div>
<div style="position:absolute;right:1065px;top:409.84px;font:normal 12px/12px 'Liberation Sans', sans-serif;color:#6d6d6d;white-space:nowrap;text-align:right;">30 KB</div>
<div style="position:absolute;left:1146px;top:533px;width:1px;height:65px;background:#cfcfcf"></div>
<div style="position:absolute;right:1690px;top:548.34px;font:normal 12px/12px 'Liberation Sans', sans-serif;color:#000;white-space:nowrap;text-align:right;letter-spacing:-0.3px">File name:</div>
<div style="position:absolute;right:1690px;top:573.34px;font:normal 12px/12px 'Liberation Sans', sans-serif;color:#000;white-space:nowrap;text-align:right;letter-spacing:-0.5px">Save as type:</div>
<div style="position:absolute;left:143px;top:543px;width:999px;height:23px;background:#fff;border:1px solid #3c7fb1;box-sizing:border-box"></div>
<div style="position:absolute;left:149px;top:548.34px;font:normal 12px/12px 'Liberation Sans', sans-serif;color:#000;white-space:nowrap;">sample-dashboard-01.xml</div>
<div style="position:absolute;left:288px;top:546px;width:1px;height:16px;background:#000"></div>
<svg style="position:absolute;left:1129px;top:551px" width="10" height="8" viewBox="0 0 10 8"><path d="M1.5 1.5 L5 5.5 L8.5 1.5" fill="none" stroke="#444" stroke-width="2"/></svg>
<div style="position:absolute;left:143px;top:568px;width:999px;height:23px;background:#fff;border:1px solid #7a7a7a;box-sizing:border-box"></div>
<div style="position:absolute;left:147px;top:573.34px;font:normal 12px/12px 'Liberation Sans', sans-serif;color:#000;white-space:nowrap;">Dashboard Files (*.xml)</div>
<svg style="position:absolute;left:1129px;top:576px" width="10" height="8" viewBox="0 0 10 8"><path d="M1.5 1.5 L5 5.5 L8.5 1.5" fill="none" stroke="#444" stroke-width="2"/></svg>
<svg style="position:absolute;left:28px;top:617px" width="18" height="18" viewBox="0 0 18 18"><defs><linearGradient id="hfg" x1="0" y1="0" x2="0" y2="1"><stop offset="0" stop-color="#f8f8f8"/><stop offset="1" stop-color="#dcdcdc"/></linearGradient></defs><circle cx="9" cy="9" r="8" fill="url(#hfg)" stroke="#b8bcc6" stroke-width="1"/><path d="M5 11 L9 6.5 L13 11 Z" fill="#2a4a8a"/></svg>
<div style="position:absolute;left:50px;top:621.84px;font:normal 12px/12px 'Liberation Sans', sans-serif;color:#000;white-space:nowrap;letter-spacing:-0.2px">Hide Folders</div>
<div style="position:absolute;left:943px;top:613px;width:86px;height:24px;background:#e1e1e1;border:1px solid #3c7fb1;box-sizing:border-box"></div>
<div style="position:absolute;left:786px;width:400px;text-align:center;top:618.84px;font:normal 12px/12px 'Liberation Sans', sans-serif;color:#000;white-space:nowrap;">Save</div>
<div style="position:absolute;left:1043px;top:613px;width:86px;height:24px;background:#e1e1e1;border:1px solid #adadad;box-sizing:border-box"></div>
<div style="position:absolute;left:886px;width:400px;text-align:center;top:618.84px;font:normal 12px/12px 'Liberation Sans', sans-serif;color:#000;white-space:nowrap;">Cancel</div>
<svg style="position:absolute;left:1136px;top:638px" width="10" height="10" viewBox="0 0 10 10"><g fill="#b8b8b8"><rect x="7" y="1" width="1.5" height="1.5"/><rect x="4" y="4" width="1.5" height="1.5"/><rect x="7" y="4" width="1.5" height="1.5"/><rect x="1" y="7" width="1.5" height="1.5"/><rect x="4" y="7" width="1.5" height="1.5"/><rect x="7" y="7" width="1.5" height="1.5"/></g></svg>
</body></html>
